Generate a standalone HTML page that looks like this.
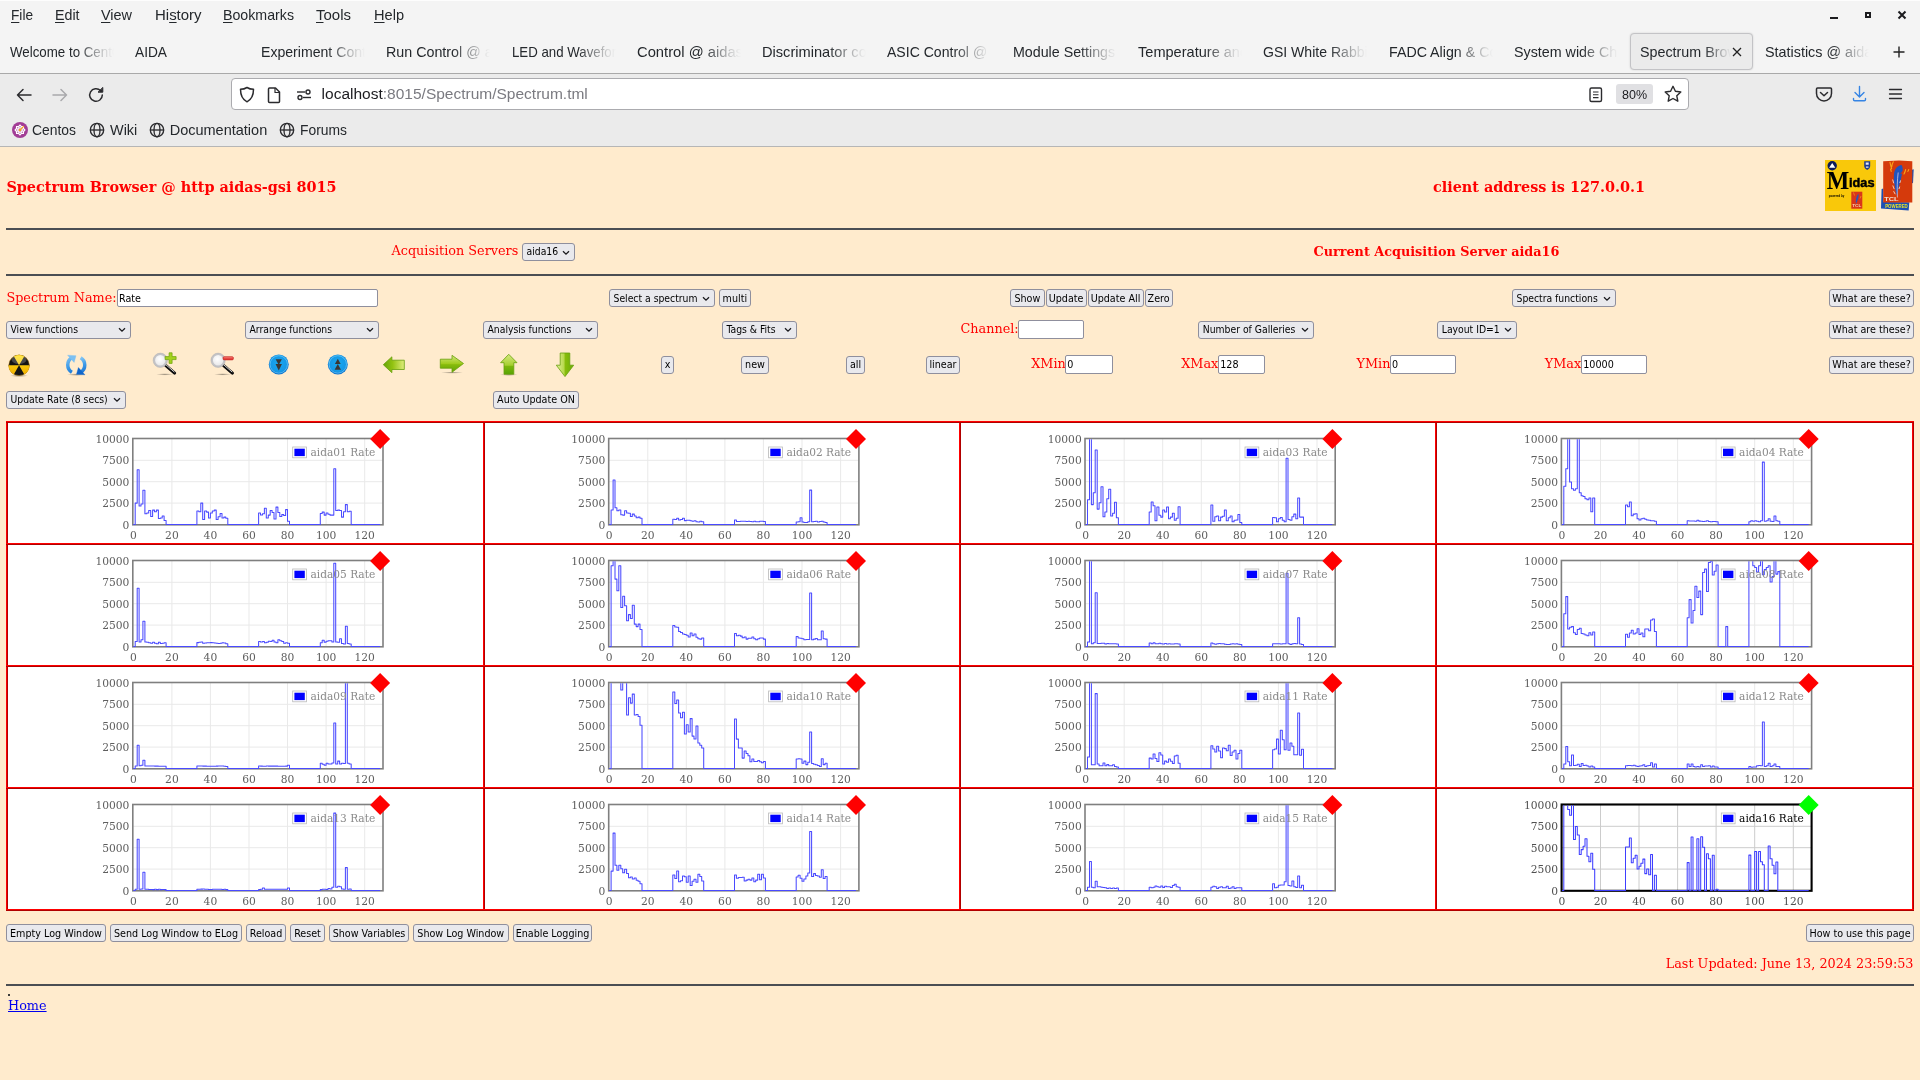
<!DOCTYPE html>
<html lang="en"><head><meta charset="utf-8"><title>Spectrum Browser</title>
<style>
*{box-sizing:border-box;margin:0;padding:0}
html,body{width:1920px;height:1080px;overflow:hidden;background:#ffebcd}
body{position:relative;will-change:transform;font-family:"DejaVu Serif","Liberation Serif",serif;color:#ff0000}
.abs{position:absolute}
#chrome{position:absolute;left:0;top:0;width:1920px;height:147px;font-family:"Liberation Sans","DejaVu Sans",sans-serif;color:#1b1b1f}
#topbar{position:absolute;left:0;top:0;width:1920px;height:73px;background:#f4f4f4;border-top:1px solid #fdfdfd}
#navbar{position:absolute;left:0;top:73px;width:1920px;height:74px;background:#ebebeb;border-top:1px solid #a9a9a9;border-bottom:1px solid #b6b6b6}
.mi{position:absolute;top:4.5px;font-size:14.5px;line-height:20px;white-space:nowrap;color:#24282c;transform-origin:0 50%}
.mi u{text-decoration:underline;text-underline-offset:2px;text-decoration-thickness:1px}
.tab{position:absolute;top:41.4px;height:22px;overflow:hidden;white-space:nowrap;font-size:14.5px;line-height:22px;color:#24282c}
#acttab{position:absolute;left:1630px;top:33px;width:123px;height:37px;border:1px solid #c3c3c6;border-radius:4px;background:#ebebeb;box-shadow:0 0 2px rgba(0,0,0,.15)}
#url{position:absolute;left:231px;top:78px;width:1458px;height:32px;background:#fff;border:1px solid #ababaf;border-radius:4px}
.bm{position:absolute;top:120.4px;font-size:14.5px;line-height:20px;color:#24282c;white-space:nowrap;transform-origin:0 50%}
.btn,.sel,.inp{position:absolute;font-family:"DejaVu Sans Condensed","DejaVu Sans","Liberation Sans",sans-serif;font-stretch:condensed;font-size:10.67px;color:#000;white-space:nowrap;overflow:hidden}
.btn{height:18px;line-height:16px;border:1px solid #8f8f9d;border-radius:3px;background:#e9e9ed;text-align:center;padding:0}
.sel{font-size:10.3px;height:18px;line-height:16px;border:1px solid #8f8f9d;border-radius:3px;background:#e9e9ed;padding-left:3.5px}
.sel svg{position:absolute;right:4px;top:5.5px}
.inp{height:17.5px;line-height:15.5px;border:1px solid #8f8f9d;border-radius:2px;background:#fff;padding-left:1px}
.lbl{position:absolute;font-size:12.8px;line-height:18px;white-space:nowrap;color:#ff0000}
.hb{position:absolute;font-size:14.4px;font-weight:bold;line-height:18px;white-space:nowrap;color:#ff0000}
.hr{position:absolute;left:6px;width:1908px;height:2px;background:#4b4e53}
</style></head>
<body>
<div id="chrome"><div id="topbar"></div><div id="navbar"></div>
<div class="mi" style="left:10.5px;transform:scaleX(0.942)"><u>F</u>ile</div>
<div class="mi" style="left:55px;transform:scaleX(0.980)"><u>E</u>dit</div>
<div class="mi" style="left:101px;transform:scaleX(0.995)"><u>V</u>iew</div>
<div class="mi" style="left:155px;transform:scaleX(1.031)">Hi<u>s</u>tory</div>
<div class="mi" style="left:223px;transform:scaleX(0.979)"><u>B</u>ookmarks</div>
<div class="mi" style="left:316px;transform:scaleX(1.034)"><u>T</u>ools</div>
<div class="mi" style="left:374px;transform:scaleX(1.006)"><u>H</u>elp</div>
<svg class="abs" style="left:1820px;top:5px" width="100" height="22" viewBox="0 0 100 22"><g stroke="#1c1c1f" stroke-width="2" fill="none"><path d="M10 13h8"/><rect x="46" y="8" width="4" height="4" stroke-width="2"/><path d="M78.500 6.500l7 7M85.500 6.500l-7 7"/></g></svg>
<div id="acttab"></div>
<div class="tab" style="left:10px;width:115.5px;transform-origin:0 50%;transform:scaleX(0.918);-webkit-mask-image:linear-gradient(to right,#000 0,#000 71.9px,rgba(0,0,0,.15) 104.6px,transparent 113.3px);mask-image:linear-gradient(to right,#000 0,#000 71.9px,rgba(0,0,0,.15) 104.6px,transparent 113.3px)">Welcome to CentOS</div>
<div class="tab" style="left:135px;width:112.1px;transform-origin:0 50%;transform:scaleX(0.946);-webkit-mask-image:linear-gradient(to right,#000 0,#000 69.8px,rgba(0,0,0,.15) 101.5px,transparent 110.0px);mask-image:linear-gradient(to right,#000 0,#000 69.8px,rgba(0,0,0,.15) 101.5px,transparent 110.0px)">AIDA</div>
<div class="tab" style="left:261px;width:109.0px;transform-origin:0 50%;transform:scaleX(0.972);-webkit-mask-image:linear-gradient(to right,#000 0,#000 67.9px,rgba(0,0,0,.15) 98.7px,transparent 107.0px);mask-image:linear-gradient(to right,#000 0,#000 67.9px,rgba(0,0,0,.15) 98.7px,transparent 107.0px)">Experiment Control</div>
<div class="tab" style="left:386px;width:107.6px;transform-origin:0 50%;transform:scaleX(0.985);-webkit-mask-image:linear-gradient(to right,#000 0,#000 67.0px,rgba(0,0,0,.15) 97.4px,transparent 105.6px);mask-image:linear-gradient(to right,#000 0,#000 67.0px,rgba(0,0,0,.15) 97.4px,transparent 105.6px)">Run Control @ aidas</div>
<div class="tab" style="left:511.7px;width:115.9px;transform-origin:0 50%;transform:scaleX(0.914);-webkit-mask-image:linear-gradient(to right,#000 0,#000 72.2px,rgba(0,0,0,.15) 105.0px,transparent 113.7px);mask-image:linear-gradient(to right,#000 0,#000 72.2px,rgba(0,0,0,.15) 105.0px,transparent 113.7px)">LED and Waveform</div>
<div class="tab" style="left:636.7px;width:104.2px;transform-origin:0 50%;transform:scaleX(1.017);-webkit-mask-image:linear-gradient(to right,#000 0,#000 64.9px,rgba(0,0,0,.15) 94.4px,transparent 102.3px);mask-image:linear-gradient(to right,#000 0,#000 64.9px,rgba(0,0,0,.15) 94.4px,transparent 102.3px)">Control @ aidas-gsi</div>
<div class="tab" style="left:762px;width:105.1px;transform-origin:0 50%;transform:scaleX(1.008);-webkit-mask-image:linear-gradient(to right,#000 0,#000 65.5px,rgba(0,0,0,.15) 95.2px,transparent 103.1px);mask-image:linear-gradient(to right,#000 0,#000 65.5px,rgba(0,0,0,.15) 95.2px,transparent 103.1px)">Discriminator control</div>
<div class="tab" style="left:887.3px;width:109.4px;transform-origin:0 50%;transform:scaleX(0.969);-webkit-mask-image:linear-gradient(to right,#000 0,#000 68.1px,rgba(0,0,0,.15) 99.1px,transparent 107.3px);mask-image:linear-gradient(to right,#000 0,#000 68.1px,rgba(0,0,0,.15) 99.1px,transparent 107.3px)">ASIC Control @ aidas</div>
<div class="tab" style="left:1013.3px;width:107.9px;transform-origin:0 50%;transform:scaleX(0.982);-webkit-mask-image:linear-gradient(to right,#000 0,#000 67.2px,rgba(0,0,0,.15) 97.8px,transparent 105.9px);mask-image:linear-gradient(to right,#000 0,#000 67.2px,rgba(0,0,0,.15) 97.8px,transparent 105.9px)">Module Settings @</div>
<div class="tab" style="left:1138.3px;width:105.6px;transform-origin:0 50%;transform:scaleX(1.004);-webkit-mask-image:linear-gradient(to right,#000 0,#000 65.8px,rgba(0,0,0,.15) 95.6px,transparent 103.6px);mask-image:linear-gradient(to right,#000 0,#000 65.8px,rgba(0,0,0,.15) 95.6px,transparent 103.6px)">Temperature and</div>
<div class="tab" style="left:1263.3px;width:109.4px;transform-origin:0 50%;transform:scaleX(0.969);-webkit-mask-image:linear-gradient(to right,#000 0,#000 68.1px,rgba(0,0,0,.15) 99.1px,transparent 107.4px);mask-image:linear-gradient(to right,#000 0,#000 68.1px,rgba(0,0,0,.15) 99.1px,transparent 107.4px)">GSI White Rabbit</div>
<div class="tab" style="left:1389px;width:108.1px;transform-origin:0 50%;transform:scaleX(0.981);-webkit-mask-image:linear-gradient(to right,#000 0,#000 67.3px,rgba(0,0,0,.15) 97.9px,transparent 106.1px);mask-image:linear-gradient(to right,#000 0,#000 67.3px,rgba(0,0,0,.15) 97.9px,transparent 106.1px)">FADC Align &amp; Control</div>
<div class="tab" style="left:1514.2px;width:107.6px;transform-origin:0 50%;transform:scaleX(0.985);-webkit-mask-image:linear-gradient(to right,#000 0,#000 67.0px,rgba(0,0,0,.15) 97.4px,transparent 105.5px);mask-image:linear-gradient(to right,#000 0,#000 67.0px,rgba(0,0,0,.15) 97.4px,transparent 105.5px)">System wide Checks</div>
<div class="tab" style="left:1639.6px;width:93.3px;transform-origin:0 50%;transform:scaleX(0.986);-webkit-mask-image:linear-gradient(to right,#000 0,#000 64.9px,rgba(0,0,0,.15) 87.2px,transparent 92.3px);mask-image:linear-gradient(to right,#000 0,#000 64.9px,rgba(0,0,0,.15) 87.2px,transparent 92.3px)">Spectrum Browser</div>
<div class="tab" style="left:1765.4px;width:107.1px;transform-origin:0 50%;transform:scaleX(0.990);-webkit-mask-image:linear-gradient(to right,#000 0,#000 66.7px,rgba(0,0,0,.15) 97.0px,transparent 105.0px);mask-image:linear-gradient(to right,#000 0,#000 66.7px,rgba(0,0,0,.15) 97.0px,transparent 105.0px)">Statistics @ aidas</div>
<svg class="abs" style="left:1730px;top:45px" width="14" height="14" viewBox="0 0 14 14"><path d="M3 3l8 8M11 3l-8 8" stroke="#222" stroke-width="1.3" fill="none"/></svg>
<svg class="abs" style="left:1892px;top:45px" width="14" height="14" viewBox="0 0 14 14"><path d="M7 1.5v11M1.5 7h11" stroke="#222" stroke-width="1.4" fill="none"/></svg>
<svg class="abs" style="left:14px;top:84px" width="100" height="22" viewBox="0 0 100 22" fill="none" stroke-linecap="round" stroke-linejoin="round"><path d="M17 11H3.5M9 5.5L3.5 11L9 16.5" stroke="#2b2b2e" stroke-width="1.5"/><path d="M39 11h13.5M47 5.5l5.500 5.500L47 16.500" stroke="#a9a9ac" stroke-width="1.5"/><path d="M88.300 11a6.300 6.300 0 1 1-1.800-4.400" stroke="#2b2b2e" stroke-width="1.5"/><path d="M88.800 3.800v4.400h-4.400z" fill="#2b2b2e" stroke="#2b2b2e" stroke-width="1"/></svg>
<div id="url"></div>
<svg class="abs" style="left:238px;top:84px" width="80" height="22" viewBox="0 0 80 22" fill="none" stroke="#2b2b2e" stroke-width="1.5" stroke-linejoin="round"><path d="M9 3.500c2 1.300 4 1.800 6.500 1.800c0 6-1.500 10-6.500 12.500c-5-2.500-6.500-6.500-6.500-12.500c2.500 0 4.500-.5 6.500-1.800z"/><path d="M31.500 4h6l4 4v9.500a1 1 0 0 1-1 1h-9a1 1 0 0 1-1-1v-12.500a1 1 0 0 1 1-1z"/><path d="M37 4v4.500h4.500" stroke-width="1.200"/><g stroke-width="1.400"><path d="M59 8h8"/><circle cx="70" cy="8" r="2"/><path d="M73 13.500h-8"/><circle cx="62" cy="13.500" r="2"/></g></svg>
<div class="abs" style="left:321.600px;top:83.900px;font-size:15.500px;line-height:20px;white-space:nowrap;color:#1b1b1f">localhost<span style="color:#7a7a80">:8015/Spectrum/Spectrum.tml</span></div>
<svg class="abs" style="left:1586px;top:84px" width="20" height="22" viewBox="0 0 20 22" fill="none" stroke="#2b2b2e" stroke-width="1.400"><rect x="4" y="4" width="11.500" height="13.500" rx="1.500"/><path d="M7 8h5.500M7 10.800h5.500M7 13.600h5.500" stroke-width="1.100"/></svg>
<div class="abs" style="left:1616px;top:84px;width:37px;height:20px;border-radius:3px;background:#e0e0e3;font-size:12.5px;line-height:22px;text-align:center;color:#1b1b1f">80%</div>
<svg class="abs" style="left:1662px;top:83px" width="22" height="22" viewBox="0 0 22 22" fill="none" stroke="#2b2b2e" stroke-width="1.400" stroke-linejoin="round"><path d="M11 3.300l2.400 5 5.400.7-4 3.800 1 5.400-4.800-2.700-4.800 2.700 1-5.400-4-3.800 5.400-.7z"/></svg>
<svg class="abs" style="left:1812px;top:83px" width="100" height="22" viewBox="0 0 100 22" fill="none" stroke-linecap="round" stroke-linejoin="round"><path d="M5.500 5h13a1 1 0 0 1 1 1v4.500a7.500 7.500 0 0 1-15 0V6a1 1 0 0 1 1-1z" stroke="#2b2b2e" stroke-width="1.500"/><path d="M8.500 9.500l3.500 3.300 3.500-3.300" stroke="#2b2b2e" stroke-width="1.500"/><path d="M47.500 3.500v10M43 9.500l4.500 4.500 4.500-4.500M41.500 15.500v1a1.200 1.200 0 0 0 1.200 1.200h9.600a1.200 1.200 0 0 0 1.200-1.200v-1" stroke="#3584e4" stroke-width="1.400"/><path d="M77.500 6.500h12M77.500 11h12M77.500 15.500h12" stroke="#2b2b2e" stroke-width="1.300"/></svg>
<svg class="abs" style="left:11px;top:121px" width="18" height="18" viewBox="0 0 18 18"><circle cx="9" cy="9" r="8" fill="#a23d96"/><path d="M9 3.300L10.700 4.900L13 4.950L13.100 7.300L14.700 9L13.100 10.700L13 13.050L10.700 13.100L9 14.700L7.300 13.100L5 13.050L4.900 10.700L3.300 9L4.900 7.300L5 4.950L7.300 4.900Z" fill="#fff"/><g fill="#b565ab"><circle cx="12.30" cy="9.00" r=".750"/><circle cx="11.33" cy="11.33" r=".750"/><circle cx="9.00" cy="12.30" r=".750"/><circle cx="6.67" cy="11.33" r=".750"/><circle cx="5.70" cy="9.00" r=".750"/><circle cx="6.67" cy="6.67" r=".750"/><circle cx="9.00" cy="5.70" r=".750"/><circle cx="11.33" cy="6.67" r=".750"/><circle cx="10.58" cy="9.64" r=".450"/><circle cx="9.66" cy="10.56" r=".450"/><circle cx="8.36" cy="10.58" r=".450"/><circle cx="7.44" cy="9.66" r=".450"/><circle cx="7.42" cy="8.36" r=".450"/><circle cx="8.34" cy="7.44" r=".450"/><circle cx="9.64" cy="7.42" r=".450"/><circle cx="10.56" cy="8.34" r=".450"/></g><path d="M9 9L12.600 5.400" stroke="#f5a61d" stroke-width="1.100" stroke-linecap="round"/><circle cx="9" cy="9" r="1.250" fill="#f5a61d"/></svg>
<div class="bm" style="left:32.4px;transform:scaleX(0.958)">Centos</div>
<svg class="abs" style="left:89.3px;top:122.300px" width="16" height="16" viewBox="0 0 16 16" fill="none" stroke="#2b2b2e" stroke-width="1.350"><circle cx="8" cy="8" r="6.700"/><ellipse cx="8" cy="8" rx="3" ry="6.700"/><path d="M1.300 8h13.400"/></svg>
<div class="bm" style="left:109.7px;transform:scaleX(0.997)">Wiki</div>
<svg class="abs" style="left:149.3px;top:122.300px" width="16" height="16" viewBox="0 0 16 16" fill="none" stroke="#2b2b2e" stroke-width="1.350"><circle cx="8" cy="8" r="6.700"/><ellipse cx="8" cy="8" rx="3" ry="6.700"/><path d="M1.300 8h13.400"/></svg>
<div class="bm" style="left:169.7px;transform:scaleX(1.000)">Documentation</div>
<svg class="abs" style="left:279.4px;top:122.300px" width="16" height="16" viewBox="0 0 16 16" fill="none" stroke="#2b2b2e" stroke-width="1.350"><circle cx="8" cy="8" r="6.700"/><ellipse cx="8" cy="8" rx="3" ry="6.700"/><path d="M1.300 8h13.400"/></svg>
<div class="bm" style="left:300px;transform:scaleX(0.956)">Forums</div>
</div>
<div class="hb" style="left:6.400px;top:178px;font-size:14.4px">Spectrum Browser @ http aidas-gsi 8015</div>
<div class="hb" style="left:1433px;top:178px;font-size:14.4px">client address is 127.0.0.1</div>
<div class="hr" style="top:228px"></div>
<div class="hr" style="top:274px"></div>
<div class="lbl" style="left:391.5px;top:242px">Acquisition Servers</div>
<div class="sel" style="left:522px;top:243.25px;width:52.75px;height:17.5px;line-height:14px">aida16<svg width="8" height="6" viewBox="0 0 8 6"><path d="M1 1.200l3 3 3-3" fill="none" stroke="#1b1b1f" stroke-width="1.300"/></svg></div>
<div class="hb" style="left:1313.500px;top:243px;font-size:12.8px">Current Acquisition Server aida16</div>
<div class="lbl" style="left:6.4px;top:289px">Spectrum Name:</div>
<div class="inp" style="left:117px;top:289.25px;width:260.75px;height:17.5px;line-height:17.5px">Rate</div>
<div class="sel" style="left:609px;top:289.25px;width:105.75px;height:17.5px;line-height:17.5px">Select a spectrum<svg width="8" height="6" viewBox="0 0 8 6"><path d="M1 1.200l3 3 3-3" fill="none" stroke="#1b1b1f" stroke-width="1.300"/></svg></div>
<div class="btn" style="left:719px;top:289.25px;width:31.75px;height:17.5px;line-height:17.5px">multi</div>
<div class="btn" style="left:1010.25px;top:289.25px;width:34.25px;height:17.5px;line-height:17.5px">Show</div>
<div class="btn" style="left:1045.5px;top:289.25px;width:41.25px;height:17.5px;line-height:17.5px">Update</div>
<div class="btn" style="left:1087.5px;top:289.25px;width:56px;height:17.5px;line-height:17.5px">Update All</div>
<div class="btn" style="left:1144.5px;top:289.25px;width:28.25px;height:17.5px;line-height:17.5px">Zero</div>
<div class="sel" style="left:1512px;top:289.25px;width:103.75px;height:17.5px;line-height:17.5px">Spectra functions<svg width="8" height="6" viewBox="0 0 8 6"><path d="M1 1.200l3 3 3-3" fill="none" stroke="#1b1b1f" stroke-width="1.300"/></svg></div>
<div class="btn" style="left:1829.25px;top:289.25px;width:84.5px;height:17.5px;line-height:17.5px">What are these?</div>
<div class="sel" style="left:6px;top:320.5px;width:124.5px;height:18px;line-height:15px">View functions<svg width="8" height="6" viewBox="0 0 8 6"><path d="M1 1.200l3 3 3-3" fill="none" stroke="#1b1b1f" stroke-width="1.300"/></svg></div>
<div class="sel" style="left:245px;top:320.5px;width:133.5px;height:18px;line-height:15px">Arrange functions<svg width="8" height="6" viewBox="0 0 8 6"><path d="M1 1.200l3 3 3-3" fill="none" stroke="#1b1b1f" stroke-width="1.300"/></svg></div>
<div class="sel" style="left:483px;top:320.5px;width:114.75px;height:18px;line-height:15px">Analysis functions<svg width="8" height="6" viewBox="0 0 8 6"><path d="M1 1.200l3 3 3-3" fill="none" stroke="#1b1b1f" stroke-width="1.300"/></svg></div>
<div class="sel" style="left:722px;top:320.5px;width:74.75px;height:18px;line-height:15px">Tags &amp; Fits<svg width="8" height="6" viewBox="0 0 8 6"><path d="M1 1.200l3 3 3-3" fill="none" stroke="#1b1b1f" stroke-width="1.300"/></svg></div>
<div class="lbl" style="left:960.5px;top:320px">Channel:</div>
<div class="inp" style="left:1018px;top:320.25px;width:66px;height:18.5px;line-height:18.5px"></div>
<div class="sel" style="left:1198.25px;top:320.5px;width:115.5px;height:18px;line-height:15px">Number of Galleries<svg width="8" height="6" viewBox="0 0 8 6"><path d="M1 1.200l3 3 3-3" fill="none" stroke="#1b1b1f" stroke-width="1.300"/></svg></div>
<div class="sel" style="left:1437.25px;top:320.5px;width:79.5px;height:18px;line-height:15px">Layout ID=1<svg width="8" height="6" viewBox="0 0 8 6"><path d="M1 1.200l3 3 3-3" fill="none" stroke="#1b1b1f" stroke-width="1.300"/></svg></div>
<div class="btn" style="left:1829.25px;top:320.5px;width:84.5px;height:18px;line-height:16px">What are these?</div>
<div class="btn" style="left:661.25px;top:355.5px;width:12.5px;height:18px;line-height:16px">x</div>
<div class="btn" style="left:741.25px;top:355.5px;width:27.5px;height:18px;line-height:16px">new</div>
<div class="btn" style="left:846.25px;top:355.5px;width:18.5px;height:18px;line-height:16px">all</div>
<div class="btn" style="left:926.25px;top:355.5px;width:33.5px;height:18px;line-height:16px">linear</div>
<div class="lbl" style="left:1031.25px;top:355px">XMin</div>
<div class="inp" style="left:1065.25px;top:355.25px;width:47.5px;height:18.5px;line-height:18.5px">0</div>
<div class="lbl" style="left:1181.25px;top:355px">XMax</div>
<div class="inp" style="left:1218.25px;top:355.25px;width:46.5px;height:18.5px;line-height:18.5px">128</div>
<div class="lbl" style="left:1356.5px;top:355px">YMin</div>
<div class="inp" style="left:1390px;top:355.25px;width:66px;height:18.5px;line-height:18.5px">0</div>
<div class="lbl" style="left:1544.75px;top:355px">YMax</div>
<div class="inp" style="left:1581.25px;top:355.25px;width:65.5px;height:18.5px;line-height:18.5px">10000</div>
<div class="btn" style="left:1829.25px;top:355.5px;width:84.5px;height:18px;line-height:16px">What are these?</div>
<div class="sel" style="left:6px;top:390.5px;width:119.5px;height:18px;line-height:15px">Update Rate (8 secs)<svg width="8" height="6" viewBox="0 0 8 6"><path d="M1 1.200l3 3 3-3" fill="none" stroke="#1b1b1f" stroke-width="1.300"/></svg></div>
<div class="btn" style="left:493.25px;top:390.5px;width:85.5px;height:18px;line-height:16px">Auto Update ON</div>
<div class="btn" style="left:6.25px;top:924.25px;width:99.5px;height:17.5px;line-height:17.5px">Empty Log Window</div>
<div class="btn" style="left:110.25px;top:924.25px;width:131.5px;height:17.5px;line-height:17.5px">Send Log Window to ELog</div>
<div class="btn" style="left:246.25px;top:924.25px;width:39.5px;height:17.5px;line-height:17.5px">Reload</div>
<div class="btn" style="left:290.25px;top:924.25px;width:34.5px;height:17.5px;line-height:17.5px">Reset</div>
<div class="btn" style="left:329.25px;top:924.25px;width:79.5px;height:17.5px;line-height:17.5px">Show Variables</div>
<div class="btn" style="left:413px;top:924.25px;width:95.5px;height:17.5px;line-height:17.5px">Show Log Window</div>
<div class="btn" style="left:513px;top:924.25px;width:79px;height:17.5px;line-height:17.5px">Enable Logging</div>
<div class="btn" style="left:1806.25px;top:924.25px;width:107.5px;height:17.5px;line-height:17.5px">How to use this page</div>
<div class="lbl" style="right:6.500px;top:955px">Last Updated: June 13, 2024 23:59:53</div>
<div class="hr" style="top:984px"></div>
<div class="abs" style="left:8px;top:994px;width:2px;height:2px;background:#3c3c3c"></div>
<div class="lbl" style="left:8px;top:997px;font-size:12.800px;color:#0000ee;text-decoration:underline">Home</div>
<svg class="abs" style="left:0;top:345px" width="600" height="40" viewBox="0 345 600 40">
<defs>
<radialGradient id="gsh" cx="50%" cy="50%" r="50%"><stop offset="0" stop-color="#000" stop-opacity=".38"/><stop offset="1" stop-color="#000" stop-opacity="0"/></radialGradient>
<linearGradient id="gy" x1="0" y1="0" x2="0" y2="1"><stop offset="0" stop-color="#ffe01a"/><stop offset="1" stop-color="#f2b200"/></linearGradient>
<linearGradient id="gbl" gradientUnits="userSpaceOnUse" x1="66" y1="356" x2="74" y2="374"><stop offset="0" stop-color="#86c8f5"/><stop offset=".6" stop-color="#3b98e6"/><stop offset="1" stop-color="#1470d2"/></linearGradient><linearGradient id="gbl2" gradientUnits="userSpaceOnUse" x1="66" y1="356" x2="74" y2="374"><stop offset="0" stop-color="#1068cc"/><stop offset=".5" stop-color="#3f9be8"/><stop offset="1" stop-color="#9ad4f8"/></linearGradient>
<radialGradient id="gbc" cx="50%" cy="45%" r="55%"><stop offset="0" stop-color="#19a8f0"/><stop offset=".75" stop-color="#1598e6"/><stop offset="1" stop-color="#0a6cc8"/></radialGradient>
<linearGradient id="ggl" x1="0" y1="0" x2="1" y2="0"><stop offset="0" stop-color="#63a307"/><stop offset=".45" stop-color="#93c312"/><stop offset="1" stop-color="#dfec7c"/></linearGradient>
<linearGradient id="ggr" x1="0" y1="0" x2="0" y2="1"><stop offset="0" stop-color="#d3e77c"/><stop offset=".5" stop-color="#9fcb1c"/><stop offset=".55" stop-color="#86bb0c"/><stop offset="1" stop-color="#62a406"/></linearGradient>
<linearGradient id="ggu" x1="0" y1="0" x2="0" y2="1"><stop offset="0" stop-color="#d6ea80"/><stop offset=".55" stop-color="#a5cf30"/><stop offset=".6" stop-color="#7cb70c"/><stop offset="1" stop-color="#58a404"/></linearGradient>
<linearGradient id="ggd" x1="0" y1="0" x2="1" y2="0"><stop offset="0" stop-color="#e2f09a"/><stop offset=".45" stop-color="#b6d84a"/><stop offset=".5" stop-color="#88bd0c"/><stop offset="1" stop-color="#6aac06"/></linearGradient>
<radialGradient id="glens" cx="45%" cy="40%" r="60%"><stop offset="0" stop-color="#fff"/><stop offset="1" stop-color="#e4e4e6"/></radialGradient>
</defs>
<ellipse cx="19.05" cy="375.6" rx="9" ry="1.600" fill="url(#gsh)"/>
<circle cx="19.05" cy="365.3" r="10.5" fill="#141414"/>
<path d="M19.05 365.3L13.80 356.21A10.5 10.5 0 0 1 24.30 356.21ZM19.05 365.3L29.55 365.30A10.5 10.5 0 0 1 24.30 374.39ZM19.05 365.3L13.80 374.39A10.5 10.5 0 0 1 8.55 365.30Z" fill="url(#gy)"/>
<circle cx="19.05" cy="365.3" r="10.3" fill="none" stroke="#e9a51a" stroke-width=".500" stroke-opacity=".8"/>
<ellipse cx="19.05" cy="359.8" rx="7.500" ry="4.200" fill="#fff" fill-opacity=".22"/>
<ellipse cx="76.500" cy="374.600" rx="9.500" ry="1.300" fill="url(#gsh)"/>
<g><path d="M71.87 372.29A8.5 8.5 0 0 1 71.75 357.79" fill="none" stroke-width="3.500" stroke="url(#gbl)"/><path d="M67.600 355.200L76 355.700L74.100 362.400Z" fill="#7cc0f2" stroke="#7cc0f2" stroke-width=".400" stroke-linejoin="round"/></g>
<g transform="rotate(180 76.250 365)"><path d="M71.87 372.29A8.5 8.5 0 0 1 71.75 357.79" fill="none" stroke-width="3.500" stroke="url(#gbl2)"/><path d="M67.600 355.200L76 355.700L74.100 362.400Z" fill="#0f66cc" stroke="#0f66cc" stroke-width=".400" stroke-linejoin="round"/></g>
<ellipse cx="164.8" cy="374.40000000000003" rx="8.500" ry="1.200" fill="url(#gsh)"/><path d="M165.60000000000002 365.3L174.60000000000002 373.1" stroke="#0c0c0c" stroke-width="3.100" stroke-linecap="round"/><path d="M166.10000000000002 364.90000000000003L174.10000000000002 371.8" stroke="#f2f2f2" stroke-width=".900" stroke-linecap="round"/><circle cx="160.3" cy="360.3" r="6.200" fill="url(#glens)" stroke="#c3c3c6" stroke-width="2"/><circle cx="160.3" cy="360.3" r="7.200" fill="none" stroke="#a9a9ad" stroke-width=".400"/><path d="M165.10000000000002 356.6H169.10000000000002V352.8H172.10000000000002V356.6H176.10000000000002V359.6H172.10000000000002V363.40000000000003H169.10000000000002V359.6H165.10000000000002Z" fill="#a4d21e" stroke="#6c9f0a" stroke-width=".700" stroke-linejoin="round"/>
<ellipse cx="222.6" cy="374.40000000000003" rx="8.500" ry="1.200" fill="url(#gsh)"/><path d="M223.4 365.3L232.4 373.1" stroke="#0c0c0c" stroke-width="3.100" stroke-linecap="round"/><path d="M223.9 364.90000000000003L231.9 371.8" stroke="#f2f2f2" stroke-width=".900" stroke-linecap="round"/><circle cx="218.1" cy="360.3" r="6.200" fill="url(#glens)" stroke="#c3c3c6" stroke-width="2"/><circle cx="218.1" cy="360.3" r="7.200" fill="none" stroke="#a9a9ad" stroke-width=".400"/><rect x="223.0" y="356.7" width="10.400" height="3.200" rx="1.200" fill="#e5413c" stroke="#c0201c" stroke-width=".600"/><path d="M224.1 357.7H232.29999999999998" stroke="#f47a72" stroke-width=".800" stroke-linecap="round"/>
<circle cx="278.75" cy="364.4" r="10" fill="url(#gbc)"/><circle cx="278.75" cy="364.4" r="8.700" fill="none" stroke="#8fdcff" stroke-width=".700" stroke-opacity=".75"/><path d="M275.65 359.2H281.85L278.75 365.0Z" fill="#3a3634"/><path d="M275.55 364.0H281.95L278.75 370.4Z" fill="#3a3634"/>
<circle cx="337.8" cy="364.4" r="10" fill="url(#gbc)"/><circle cx="337.8" cy="364.4" r="8.700" fill="none" stroke="#8fdcff" stroke-width=".700" stroke-opacity=".75"/><path d="M337.8 358.79999999999995L340.7 363.9H334.90000000000003Z" fill="#3a3634"/><path d="M337.8 364.0L341.0 369.79999999999995H334.6Z" fill="#3a3634"/>
<path d="M383.300 364.700L391.900 356.800V360.200H404.300V369.500H391.900V372.700Z" fill="url(#ggl)" stroke="#67a00c" stroke-width=".800" stroke-linejoin="round"/>
<ellipse cx="452" cy="372.600" rx="11" ry="1.100" fill="url(#gsh)"/>
<path d="M463.500 363.500L452 355.300V359.200H440.300V368.200H452V372.300Z" fill="url(#ggr)" stroke="#67a00c" stroke-width=".800" stroke-linejoin="round"/>
<ellipse cx="508.800" cy="374.700" rx="9" ry="1.200" fill="url(#gsh)"/>
<path d="M508.750 354.300L517 362.700H513.800V374.200H504V362.700H500.600Z" fill="url(#ggu)" stroke="#67a00c" stroke-width=".800" stroke-linejoin="round"/>
<path d="M565 376.600L556.300 365.200H560.200V353H569.800V365.200H573.700Z" fill="url(#ggd)" stroke="#67a00c" stroke-width=".800" stroke-linejoin="round"/>
</svg>
<svg class="abs" style="left:1825px;top:160px" width="51" height="51" viewBox="0 0 51 51"><rect width="51" height="51" fill="#f9c80a"/><circle cx="7.200" cy="5.700" r="4.700" fill="#0c1a5a"/><path d="M7.200 3L10.300 7.800H4.100Z" fill="#fff"/><path d="M39.200 1.200h6v4.800c0 2-1.500 3.300-3 4c-1.500-.7-3-2-3-4z" fill="#1d3c8e"/><path d="M40.700 2.600h3v2.200h-3zM40.900 6.400h2.600v1.300h-2.600z" fill="#e8e8f4"/><text x="1.800" y="28.600" font-family="Liberation Serif, DejaVu Serif, serif" font-weight="bold" font-size="24.200" fill="#000" textLength="22.500" lengthAdjust="spacingAndGlyphs">M</text><text x="24" y="26.500" font-family="Liberation Sans, DejaVu Sans, sans-serif" font-weight="bold" font-size="12.500" fill="#000" stroke="#000" stroke-width=".450" textLength="25.500" lengthAdjust="spacingAndGlyphs">idas</text><text x="3.800" y="37" font-family="Liberation Sans, DejaVu Sans, sans-serif" font-weight="bold" font-size="3.600" fill="#000" textLength="15.500" lengthAdjust="spacingAndGlyphs">powered by</text><rect x="26.300" y="31.700" width="11" height="17" fill="#d9361a"/><path d="M33.400 33.800c-1.600 1.600-3 5.300-2.400 10.500c.6-2 1-3 1.900-4.600c.7-2 .9-4.300.5-5.900z" fill="#2a55b8"/><path d="M28.500 32.500l1 3M36 36l-1 2.500" stroke="#f9b21a" stroke-width=".600"/><text x="27.300" y="46.800" font-family="Liberation Sans, DejaVu Sans, sans-serif" font-weight="bold" font-size="2.600" fill="#f4d9b0" textLength="9" lengthAdjust="spacingAndGlyphs">TCL</text></svg><svg class="abs" style="left:1880px;top:159px" width="36" height="53" viewBox="0 0 36 53"><path d="M1.600 30L3.400 29.500L3.400 43L29.300 43.200L28.700 51.600L1 49.600Z" fill="#1b4fb4"/><path d="M32 10.800L33.700 10.200L33 24.200L32 24Z" fill="#1b4fb4"/><path d="M3.200 2.300L19 1.500L32.300 2.300L32.300 43.400L3.200 43.400Z" fill="#d53a0c"/><path d="M21.500 6C17.500 6.500 14.500 10 14 15C13.600 19 13.800 22 14.600 26C15.200 30 16 34 17.300 37.300C17.800 33 18.400 29 19.600 25C20.800 21 21.500 18 22 14.500L20.200 14.900L22.600 12C23 9.500 22.600 7.500 21.500 6Z" fill="#2053bd"/><path d="M18.200 13.500C17.200 21 17 30 17.400 38.500" stroke="#e9d9de" stroke-width=".700" fill="none"/><path d="M12.600 20.500l1.200 3.800M12.800 26.500l1.400 3.600M13.600 32.200l1.600 3M19.800 24l.8-2.600M19 30l.7-2.400" stroke="#f3ebe6" stroke-width=".800" fill="none"/><path d="M10 3.200c.3 2 1 4 1.600 6.500M13.300 2.800c-1 1.600-1.400 3.200-1.600 5.200M10.600 10l.6 2.400M25.600 10.600c-.2 1.500-.8 2.800-1.600 4.400M28.700 10.600l-.8 1.800" stroke="#f9a61a" stroke-width="1.100" fill="none" stroke-linecap="round"/><text x="4.300" y="41.700" font-family="Liberation Sans, DejaVu Sans, sans-serif" font-weight="bold" font-size="5.600" fill="#f3dfd3" textLength="14.300" lengthAdjust="spacingAndGlyphs">TCL</text><text x="5.200" y="48.900" font-family="Liberation Sans, DejaVu Sans, sans-serif" font-weight="bold" font-size="4.800" fill="#ece226" textLength="22.600" lengthAdjust="spacingAndGlyphs">POWERED</text></svg>
<div class="abs" style="left:6px;top:421px;width:1908px;height:490px;background:#fff"></div>
<div class="abs" style="left:6px;top:421px;width:2px;height:490px;background:linear-gradient(to right,#ff0000 0,#ff0000 50%,#b00000 50%,#b00000 100%)"></div>
<div class="abs" style="left:483px;top:421px;width:2px;height:490px;background:linear-gradient(to right,#ff0000 0,#ff0000 50%,#b00000 50%,#b00000 100%)"></div>
<div class="abs" style="left:959px;top:421px;width:2px;height:490px;background:linear-gradient(to right,#ff0000 0,#ff0000 50%,#b00000 50%,#b00000 100%)"></div>
<div class="abs" style="left:1435px;top:421px;width:2px;height:490px;background:linear-gradient(to right,#ff0000 0,#ff0000 50%,#b00000 50%,#b00000 100%)"></div>
<div class="abs" style="left:1912px;top:421px;width:2px;height:490px;background:linear-gradient(to right,#ff0000 0,#ff0000 50%,#b00000 50%,#b00000 100%)"></div>
<div class="abs" style="left:6px;top:421px;width:1908px;height:2px;background:linear-gradient(to bottom,#ff0000 0,#ff0000 50%,#b00000 50%,#b00000 100%)"></div>
<div class="abs" style="left:6px;top:543px;width:1908px;height:2px;background:linear-gradient(to bottom,#ff0000 0,#ff0000 50%,#b00000 50%,#b00000 100%)"></div>
<div class="abs" style="left:6px;top:665px;width:1908px;height:2px;background:linear-gradient(to bottom,#ff0000 0,#ff0000 50%,#b00000 50%,#b00000 100%)"></div>
<div class="abs" style="left:6px;top:787px;width:1908px;height:2px;background:linear-gradient(to bottom,#ff0000 0,#ff0000 50%,#b00000 50%,#b00000 100%)"></div>
<div class="abs" style="left:6px;top:909px;width:1908px;height:2px;background:linear-gradient(to bottom,#ff0000 0,#ff0000 50%,#b00000 50%,#b00000 100%)"></div>
<svg class="abs" style="left:8px;top:423px" width="475" height="120" viewBox="0 0 475 120" font-family="DejaVu Serif, Liberation Serif, serif"><clipPath id="cp0"><rect x="124.8" y="16.3" width="250.2" height="87.3"/></clipPath><path d="M163.9 15.5V101.8M202.4 15.5V101.8M241.0 15.5V101.8M279.5 15.5V101.8M318.1 15.5V101.8M356.7 15.5V101.8M124.8 80.1H375.0M124.8 58.7H375.0M124.8 37.3H375.0" stroke="#e9e9e9" stroke-width="1" fill="none"/><rect x="124.8" y="15.5" width="250.2" height="86.3" fill="none" stroke="#7f7f7f" stroke-width="1.6"/><path d="M125.3 101.5H127.2V80.1H129.2V46.7H131.1V83.0H133.0V81.0H134.9V67.3H136.9V90.8H138.8V89.9H140.7V87.5H142.7V93.5H144.6V87.1H146.5V88.7H148.4V87.1H150.4V95.4H152.3V94.9H154.2V92.9H156.1V97.4H158.1V101.5H160.0H161.9H163.9H165.8H167.7H169.6H171.6H173.5H175.4H177.4H179.3H181.2H183.1H185.1H187.0H188.9V88.0H190.9V88.7H192.8V80.1H194.7V96.5H196.6V88.0H198.6V89.1H200.5V94.9H202.4V89.9H204.3V88.0H206.3V87.1H208.2V96.5H210.1V93.8H212.1V90.4H214.0V94.9H215.9V94.1H217.8V95.3H219.8V101.5H221.7H223.6H225.6H227.5H229.4H231.3H233.3H235.2H237.1H239.1H241.0H242.9H244.8H246.8H248.7H250.6V89.9H252.5V91.9H254.5V90.8H256.4V85.2H258.3V94.9H260.3V92.1H262.2V87.5H264.1V89.5H266.0V96.0H268.0V84.1H269.9V89.5H271.8V93.5H273.8V91.6H275.7V92.4H277.6V86.6H279.5V98.2H281.5V101.5H283.4H285.3H287.3H289.2H291.1H293.0H295.0H296.9H298.8H300.7H302.7H304.6H306.5H308.5H310.4H312.3V90.4H314.2V89.1H316.2V92.1H318.1V89.9H320.0V91.2H322.0V92.1H323.9H325.8V45.7H327.7V87.5H329.7V87.1H331.6V87.5H333.5V94.1H335.5V88.7H337.4V81.6H339.3V88.7H341.2V88.3H343.2V101.5H345.1H347.0H348.9H350.9H352.8H354.7H356.7H358.6H360.5H362.4H364.4H366.3H368.2H370.2H372.1" stroke="#4a4aff" stroke-width="1.050" fill="none" stroke-linejoin="round" clip-path="url(#cp0)"/><text x="121.4" y="105.5" font-size="10.700" text-anchor="end" fill="#5e5e5e">0</text><text x="121.4" y="84.1" font-size="10.700" text-anchor="end" fill="#5e5e5e">2500</text><text x="121.4" y="62.7" font-size="10.700" text-anchor="end" fill="#5e5e5e">5000</text><text x="121.4" y="41.3" font-size="10.700" text-anchor="end" fill="#5e5e5e">7500</text><text x="121.4" y="19.9" font-size="10.700" text-anchor="end" fill="#5e5e5e">10000</text><text x="125.3" y="116.0" font-size="10.700" text-anchor="middle" fill="#5e5e5e">0</text><text x="163.9" y="116.0" font-size="10.700" text-anchor="middle" fill="#5e5e5e">20</text><text x="202.4" y="116.0" font-size="10.700" text-anchor="middle" fill="#5e5e5e">40</text><text x="241.0" y="116.0" font-size="10.700" text-anchor="middle" fill="#5e5e5e">60</text><text x="279.5" y="116.0" font-size="10.700" text-anchor="middle" fill="#5e5e5e">80</text><text x="318.1" y="116.0" font-size="10.700" text-anchor="middle" fill="#5e5e5e">100</text><text x="356.7" y="116.0" font-size="10.700" text-anchor="middle" fill="#5e5e5e">120</text><rect x="284.7" y="24.0" width="13.800" height="10.800" fill="#fff" stroke="#b9b9b9" stroke-width="0.800"/><rect x="286.4" y="25.7" width="10.400" height="7.400" fill="#0000ff"/><text x="302.5" y="33.3" font-size="10.600" fill="#8a8a8a">aida01 Rate</text><path d="M372.1 6.1L382.1 16.1L372.1 26.1L362.1 16.1Z" fill="#ff0000"/></svg>
<svg class="abs" style="left:485px;top:423px" width="475" height="120" viewBox="0 0 475 120" font-family="DejaVu Serif, Liberation Serif, serif"><clipPath id="cp1"><rect x="123.7" y="16.3" width="250.2" height="87.3"/></clipPath><path d="M162.8 15.5V101.8M201.3 15.5V101.8M239.9 15.5V101.8M278.4 15.5V101.8M317.0 15.5V101.8M355.6 15.5V101.8M123.7 80.1H373.9M123.7 58.7H373.9M123.7 37.3H373.9" stroke="#e9e9e9" stroke-width="1" fill="none"/><rect x="123.7" y="15.5" width="250.2" height="86.3" fill="none" stroke="#7f7f7f" stroke-width="1.6"/><path d="M124.2 101.5H126.1V87.0H128.1V57.0H130.0V84.8H131.9V87.8H133.8V86.9H135.8V91.8H137.7V92.1H139.6V87.8H141.6V89.9H143.5V90.2H145.4V93.5H147.3V91.1H149.3V92.9H151.2V94.8H153.1V94.1H155.0V95.2H157.0V101.5H158.9H160.8H162.8H164.7H166.6H168.5H170.5H172.4H174.3H176.3H178.2H180.1H182.0H184.0H185.9H187.8V96.2H189.8V96.5H191.7V95.3H193.6V97.0H195.5V96.5H197.5V95.3H199.4V97.6H201.3V97.3H203.2H205.2V97.8H207.1V98.2H209.0V97.8H211.0V98.7H212.9V99.0H214.8V98.2H216.7V98.7H218.7V101.5H220.6H222.5H224.5H226.4H228.3H230.2H232.2H234.1H236.0H238.0H239.9H241.8H243.7H245.7H247.6H249.5V97.0H251.4V98.5H253.4H255.3V98.3H257.2V98.2H259.2V98.3H261.1V98.5H263.0V98.3H264.9V98.5H266.9V98.7H268.8V98.2H270.7V98.8H272.7V98.7H274.6V98.3H276.5V98.2H278.4V98.5H280.4V101.5H282.3H284.2H286.2H288.1H290.0H291.9H293.9H295.8H297.7H299.6H301.6H303.5H305.4H307.4H309.3H311.2V99.0H313.1V98.7H315.1V94.8H317.0V99.0H318.9V99.5H320.9V99.4H322.8V98.7H324.7V67.1H326.6V98.7H328.6V98.5H330.5V98.2H332.4V99.0H334.4V98.5H336.3V98.2H338.2V99.0H340.1V99.4H342.1V101.5H344.0H345.9H347.8H349.8H351.7H353.6H355.6H357.5H359.4H361.3H363.3H365.2H367.1H369.1H371.0" stroke="#4a4aff" stroke-width="1.050" fill="none" stroke-linejoin="round" clip-path="url(#cp1)"/><text x="120.3" y="105.5" font-size="10.700" text-anchor="end" fill="#5e5e5e">0</text><text x="120.3" y="84.1" font-size="10.700" text-anchor="end" fill="#5e5e5e">2500</text><text x="120.3" y="62.7" font-size="10.700" text-anchor="end" fill="#5e5e5e">5000</text><text x="120.3" y="41.3" font-size="10.700" text-anchor="end" fill="#5e5e5e">7500</text><text x="120.3" y="19.9" font-size="10.700" text-anchor="end" fill="#5e5e5e">10000</text><text x="124.2" y="116.0" font-size="10.700" text-anchor="middle" fill="#5e5e5e">0</text><text x="162.8" y="116.0" font-size="10.700" text-anchor="middle" fill="#5e5e5e">20</text><text x="201.3" y="116.0" font-size="10.700" text-anchor="middle" fill="#5e5e5e">40</text><text x="239.9" y="116.0" font-size="10.700" text-anchor="middle" fill="#5e5e5e">60</text><text x="278.4" y="116.0" font-size="10.700" text-anchor="middle" fill="#5e5e5e">80</text><text x="317.0" y="116.0" font-size="10.700" text-anchor="middle" fill="#5e5e5e">100</text><text x="355.6" y="116.0" font-size="10.700" text-anchor="middle" fill="#5e5e5e">120</text><rect x="283.6" y="24.0" width="13.800" height="10.800" fill="#fff" stroke="#b9b9b9" stroke-width="0.800"/><rect x="285.3" y="25.7" width="10.400" height="7.400" fill="#0000ff"/><text x="301.4" y="33.3" font-size="10.600" fill="#8a8a8a">aida02 Rate</text><path d="M371.0 6.1L381.0 16.1L371.0 26.1L361.0 16.1Z" fill="#ff0000"/></svg>
<svg class="abs" style="left:961px;top:423px" width="475" height="120" viewBox="0 0 475 120" font-family="DejaVu Serif, Liberation Serif, serif"><clipPath id="cp2"><rect x="124.0" y="16.3" width="250.2" height="87.3"/></clipPath><path d="M163.2 15.5V101.8M201.7 15.5V101.8M240.3 15.5V101.8M278.8 15.5V101.8M317.4 15.5V101.8M356.0 15.5V101.8M124.0 80.1H374.3M124.0 58.7H374.3M124.0 37.3H374.3" stroke="#e9e9e9" stroke-width="1" fill="none"/><rect x="124.0" y="15.5" width="250.2" height="86.3" fill="none" stroke="#7f7f7f" stroke-width="1.6"/><path d="M124.6 101.5H126.5V76.8H128.5V12.5H130.4V81.6H132.3V69.8H134.2V26.9H136.2V86.1H138.1V79.8H140.0V63.8H142.0V93.7H143.9V89.0H145.8V75.7H147.7V66.2H149.7V92.9H151.6V90.2H153.5V79.3H155.4V94.8H157.4V101.5H159.3H161.2H163.2H165.1H167.0H168.9H170.9H172.8H174.7H176.7H178.6H180.5H182.4H184.4H186.3H188.2V89.0H190.2V79.0H192.1V82.8H194.0V97.8H195.9V84.0H197.9V92.3H199.8V94.1H201.7V87.0H203.6V89.0H205.6V84.0H207.5V95.7H209.4V94.1H211.4V90.2H213.3V97.3H215.2V95.2H217.1V83.7H219.1V101.5H221.0H222.9H224.9H226.8H228.7H230.6H232.6H234.5H236.4H238.4H240.3H242.2H244.1H246.1H248.0H249.9V82.0H251.8V98.2H253.8V93.7H255.7V92.9H257.6V97.8H259.6V94.1H261.5V93.2H263.4V87.0H265.3V97.8H267.3V94.8H269.2V92.9H271.1V98.7H273.1V97.3H275.0V96.9H276.9V91.5H278.8V99.4H280.8V101.5H282.7H284.6H286.6H288.5H290.4H292.3H294.3H296.2H298.1H300.0H302.0H303.9H305.8H307.8H309.7H311.6V94.5H313.5V94.8H315.5V98.7H317.4V95.7H319.3V94.5H321.3V97.3H323.2V98.7H325.1V35.2H327.0V96.5H329.0V97.3H330.9V93.7H332.8V91.1H334.8V95.7H336.7V74.9H338.6V94.1H340.5H342.5V101.5H344.4H346.3H348.2H350.2H352.1H354.0H356.0H357.9H359.8H361.7H363.7H365.6H367.5H369.5H371.4" stroke="#4a4aff" stroke-width="1.050" fill="none" stroke-linejoin="round" clip-path="url(#cp2)"/><text x="120.7" y="105.5" font-size="10.700" text-anchor="end" fill="#5e5e5e">0</text><text x="120.7" y="84.1" font-size="10.700" text-anchor="end" fill="#5e5e5e">2500</text><text x="120.7" y="62.7" font-size="10.700" text-anchor="end" fill="#5e5e5e">5000</text><text x="120.7" y="41.3" font-size="10.700" text-anchor="end" fill="#5e5e5e">7500</text><text x="120.7" y="19.9" font-size="10.700" text-anchor="end" fill="#5e5e5e">10000</text><text x="124.6" y="116.0" font-size="10.700" text-anchor="middle" fill="#5e5e5e">0</text><text x="163.2" y="116.0" font-size="10.700" text-anchor="middle" fill="#5e5e5e">20</text><text x="201.7" y="116.0" font-size="10.700" text-anchor="middle" fill="#5e5e5e">40</text><text x="240.3" y="116.0" font-size="10.700" text-anchor="middle" fill="#5e5e5e">60</text><text x="278.8" y="116.0" font-size="10.700" text-anchor="middle" fill="#5e5e5e">80</text><text x="317.4" y="116.0" font-size="10.700" text-anchor="middle" fill="#5e5e5e">100</text><text x="356.0" y="116.0" font-size="10.700" text-anchor="middle" fill="#5e5e5e">120</text><rect x="284.0" y="24.0" width="13.800" height="10.800" fill="#fff" stroke="#b9b9b9" stroke-width="0.800"/><rect x="285.7" y="25.7" width="10.400" height="7.400" fill="#0000ff"/><text x="301.8" y="33.3" font-size="10.600" fill="#8a8a8a">aida03 Rate</text><path d="M371.4 6.1L381.4 16.1L371.4 26.1L361.4 16.1Z" fill="#ff0000"/></svg>
<svg class="abs" style="left:1437px;top:423px" width="475" height="120" viewBox="0 0 475 120" font-family="DejaVu Serif, Liberation Serif, serif"><clipPath id="cp3"><rect x="124.4" y="16.3" width="250.2" height="87.3"/></clipPath><path d="M163.5 15.5V101.8M202.0 15.5V101.8M240.6 15.5V101.8M279.1 15.5V101.8M317.7 15.5V101.8M356.3 15.5V101.8M124.4 80.1H374.6M124.4 58.7H374.6M124.4 37.3H374.6" stroke="#e9e9e9" stroke-width="1" fill="none"/><rect x="124.4" y="15.5" width="250.2" height="86.3" fill="none" stroke="#7f7f7f" stroke-width="1.6"/><path d="M124.9 101.5H126.8V63.2H128.8V45.8H130.7V12.5H132.6V59.0H134.5V65.7H136.5V67.3H138.4V65.7H140.3V12.5H142.3V69.8H144.2V72.8H146.1V73.5H148.0V75.7H150.0V76.8H151.9V75.0H153.8V88.7H155.7V75.0H157.7V101.5H159.6H161.5H163.5H165.4H167.3H169.2H171.2H173.1H175.0H177.0H178.9H180.8H182.7H184.7H186.6H188.5V82.0H190.5V83.7H192.4V79.0H194.3V92.7H196.2V91.1H198.2V90.7H200.1V95.7H202.0V96.9H203.9V95.7H205.9V95.2H207.8V96.2H209.7V96.9H211.7V97.3H213.6V97.8H215.5H217.4V98.2H219.4V101.5H221.3H223.2H225.2H227.1H229.0H230.9H232.9H234.8H236.7H238.7H240.6H242.5H244.4H246.4H248.3H250.2V97.8H252.1V98.0H254.1H256.0H257.9V98.2H259.9V97.2H261.8V98.1H263.7V98.3H265.6V98.5H267.6V98.3H269.5V97.8H271.4V98.5H273.4V98.7H275.3V98.5H277.2H279.1V98.8H281.1V101.5H283.0H284.9H286.9H288.8H290.7H292.6H294.6H296.5H298.4H300.3H302.3H304.2H306.1H308.1H310.0H311.9V98.7H313.8V97.8H315.8V98.2H317.7V97.8H319.6V98.2H321.6V98.7H323.5V97.8H325.4V39.1H327.3V98.2H329.3V97.8H331.2V95.7H333.1V98.2H335.1V98.5H337.0V92.9H338.9V97.8H340.8V98.2H342.8V101.5H344.7H346.6H348.5H350.5H352.4H354.3H356.3H358.2H360.1H362.0H364.0H365.9H367.8H369.8H371.7" stroke="#4a4aff" stroke-width="1.050" fill="none" stroke-linejoin="round" clip-path="url(#cp3)"/><text x="121.0" y="105.5" font-size="10.700" text-anchor="end" fill="#5e5e5e">0</text><text x="121.0" y="84.1" font-size="10.700" text-anchor="end" fill="#5e5e5e">2500</text><text x="121.0" y="62.7" font-size="10.700" text-anchor="end" fill="#5e5e5e">5000</text><text x="121.0" y="41.3" font-size="10.700" text-anchor="end" fill="#5e5e5e">7500</text><text x="121.0" y="19.9" font-size="10.700" text-anchor="end" fill="#5e5e5e">10000</text><text x="124.9" y="116.0" font-size="10.700" text-anchor="middle" fill="#5e5e5e">0</text><text x="163.5" y="116.0" font-size="10.700" text-anchor="middle" fill="#5e5e5e">20</text><text x="202.0" y="116.0" font-size="10.700" text-anchor="middle" fill="#5e5e5e">40</text><text x="240.6" y="116.0" font-size="10.700" text-anchor="middle" fill="#5e5e5e">60</text><text x="279.1" y="116.0" font-size="10.700" text-anchor="middle" fill="#5e5e5e">80</text><text x="317.7" y="116.0" font-size="10.700" text-anchor="middle" fill="#5e5e5e">100</text><text x="356.3" y="116.0" font-size="10.700" text-anchor="middle" fill="#5e5e5e">120</text><rect x="284.3" y="24.0" width="13.800" height="10.800" fill="#fff" stroke="#b9b9b9" stroke-width="0.800"/><rect x="286.0" y="25.7" width="10.400" height="7.400" fill="#0000ff"/><text x="302.1" y="33.3" font-size="10.600" fill="#8a8a8a">aida04 Rate</text><path d="M371.7 6.1L381.7 16.1L371.7 26.1L361.7 16.1Z" fill="#ff0000"/></svg>
<svg class="abs" style="left:8px;top:545px" width="475" height="120" viewBox="0 0 475 120" font-family="DejaVu Serif, Liberation Serif, serif"><clipPath id="cp4"><rect x="124.8" y="16.3" width="250.2" height="87.3"/></clipPath><path d="M163.9 15.5V101.8M202.4 15.5V101.8M241.0 15.5V101.8M279.5 15.5V101.8M318.1 15.5V101.8M356.7 15.5V101.8M124.8 80.1H375.0M124.8 58.7H375.0M124.8 37.3H375.0" stroke="#e9e9e9" stroke-width="1" fill="none"/><rect x="124.8" y="15.5" width="250.2" height="86.3" fill="none" stroke="#7f7f7f" stroke-width="1.6"/><path d="M125.3 101.5H127.2V96.5H129.2V43.3H131.1V96.9H133.0V94.8H134.9V76.2H136.9V97.0H138.8V97.3H140.7V97.8H142.7V98.2H144.6V97.3H146.5V98.2H148.4V98.7H150.4V97.3H152.3V98.5H154.2V98.2H156.1V97.8H158.1V101.5H160.0H161.9H163.9H165.8H167.7H169.6H171.6H173.5H175.4H177.4H179.3H181.2H183.1H185.1H187.0H188.9V97.6H190.9V97.2H192.8V97.0H194.7V98.3H196.6V98.0H198.6V97.8H200.5H202.4V97.6H204.3V97.8H206.3V98.0H208.2V98.3H210.1V98.5H212.1V98.2H214.0V97.8H215.9V98.0H217.8V98.7H219.8V101.5H221.7H223.6H225.6H227.5H229.4H231.3H233.3H235.2H237.1H239.1H241.0H242.9H244.8H246.8H248.7H250.6V96.5H252.5V97.0H254.5V96.5H256.4V97.8H258.3V97.3H260.3V96.2H262.2V96.5H264.1V95.2H266.0V96.9H268.0V97.8H269.9V94.8H271.8V95.7H273.8V96.5H275.7V98.2H277.6V97.8H279.5V98.2H281.5V101.5H283.4H285.3H287.3H289.2H291.1H293.0H295.0H296.9H298.8H300.7H302.7H304.6H306.5H308.5H310.4H312.3V97.8H314.2V95.2H316.2V97.3H318.1V96.2H320.0V95.7H322.0H323.9V96.9H325.8V18.3H327.7V97.0H329.7V97.3H331.6V93.7H333.5V98.5H335.5V99.0H337.4V81.2H339.3V98.5H341.2V99.0H343.2V101.5H345.1H347.0H348.9H350.9H352.8H354.7H356.7H358.6H360.5H362.4H364.4H366.3H368.2H370.2H372.1" stroke="#4a4aff" stroke-width="1.050" fill="none" stroke-linejoin="round" clip-path="url(#cp4)"/><text x="121.4" y="105.5" font-size="10.700" text-anchor="end" fill="#5e5e5e">0</text><text x="121.4" y="84.1" font-size="10.700" text-anchor="end" fill="#5e5e5e">2500</text><text x="121.4" y="62.7" font-size="10.700" text-anchor="end" fill="#5e5e5e">5000</text><text x="121.4" y="41.3" font-size="10.700" text-anchor="end" fill="#5e5e5e">7500</text><text x="121.4" y="19.9" font-size="10.700" text-anchor="end" fill="#5e5e5e">10000</text><text x="125.3" y="116.0" font-size="10.700" text-anchor="middle" fill="#5e5e5e">0</text><text x="163.9" y="116.0" font-size="10.700" text-anchor="middle" fill="#5e5e5e">20</text><text x="202.4" y="116.0" font-size="10.700" text-anchor="middle" fill="#5e5e5e">40</text><text x="241.0" y="116.0" font-size="10.700" text-anchor="middle" fill="#5e5e5e">60</text><text x="279.5" y="116.0" font-size="10.700" text-anchor="middle" fill="#5e5e5e">80</text><text x="318.1" y="116.0" font-size="10.700" text-anchor="middle" fill="#5e5e5e">100</text><text x="356.7" y="116.0" font-size="10.700" text-anchor="middle" fill="#5e5e5e">120</text><rect x="284.7" y="24.0" width="13.800" height="10.800" fill="#fff" stroke="#b9b9b9" stroke-width="0.800"/><rect x="286.4" y="25.7" width="10.400" height="7.400" fill="#0000ff"/><text x="302.5" y="33.3" font-size="10.600" fill="#8a8a8a">aida05 Rate</text><path d="M372.1 6.1L382.1 16.1L372.1 26.1L362.1 16.1Z" fill="#ff0000"/></svg>
<svg class="abs" style="left:485px;top:545px" width="475" height="120" viewBox="0 0 475 120" font-family="DejaVu Serif, Liberation Serif, serif"><clipPath id="cp5"><rect x="123.7" y="16.3" width="250.2" height="87.3"/></clipPath><path d="M162.8 15.5V101.8M201.3 15.5V101.8M239.9 15.5V101.8M278.4 15.5V101.8M317.0 15.5V101.8M355.6 15.5V101.8M123.7 80.1H373.9M123.7 58.7H373.9M123.7 37.3H373.9" stroke="#e9e9e9" stroke-width="1" fill="none"/><rect x="123.7" y="15.5" width="250.2" height="86.3" fill="none" stroke="#7f7f7f" stroke-width="1.6"/><path d="M124.2 101.5H126.1V20.8H128.1V12.5H130.0V34.1H131.9V45.8H133.8V20.8H135.8V62.4H137.7V51.3H139.6V60.8H141.6V75.7H143.5V69.6H145.4V73.5H147.3V60.2H149.3V79.1H151.2V81.6H153.1V79.1H155.0V84.4H157.0V101.5H158.9H160.8H162.8H164.7H166.6H168.5H170.5H172.4H174.3H176.3H178.2H180.1H182.0H184.0H185.9H187.8V80.4H189.8V81.9H191.7V82.3H193.6V86.5H195.5V87.4H197.5V89.0H199.4V89.5H201.3V90.2H203.2V92.0H205.2V87.9H207.1V90.7H209.0V89.0H211.0V92.3H212.9V93.7H214.8V94.1H216.7V92.9H218.7V101.5H220.6H222.5H224.5H226.4H228.3H230.2H232.2H234.1H236.0H238.0H239.9H241.8H243.7H245.7H247.6H249.5V88.5H251.4V90.7H253.4V90.2H255.3V91.1H257.2V92.7H259.2V92.0H261.1V94.1H263.0V93.2H264.9H266.9V92.0H268.8V93.7H270.7V94.8H272.7V93.7H274.6V92.9H276.5H278.4V94.1H280.4V101.5H282.3H284.2H286.2H288.1H290.0H291.9H293.9H295.8H297.7H299.6H301.6H303.5H305.4H307.4H309.3H311.2V91.5H313.1V92.9H315.1V93.2H317.0V93.7H318.9V94.8H320.9V94.5H322.8H324.7V47.9H326.6V94.8H328.6V94.1H330.5V93.5H332.4V94.8H334.4H336.3V86.0H338.2V93.7H340.1V94.1H342.1V101.5H344.0H345.9H347.8H349.8H351.7H353.6H355.6H357.5H359.4H361.3H363.3H365.2H367.1H369.1H371.0" stroke="#4a4aff" stroke-width="1.050" fill="none" stroke-linejoin="round" clip-path="url(#cp5)"/><text x="120.3" y="105.5" font-size="10.700" text-anchor="end" fill="#5e5e5e">0</text><text x="120.3" y="84.1" font-size="10.700" text-anchor="end" fill="#5e5e5e">2500</text><text x="120.3" y="62.7" font-size="10.700" text-anchor="end" fill="#5e5e5e">5000</text><text x="120.3" y="41.3" font-size="10.700" text-anchor="end" fill="#5e5e5e">7500</text><text x="120.3" y="19.9" font-size="10.700" text-anchor="end" fill="#5e5e5e">10000</text><text x="124.2" y="116.0" font-size="10.700" text-anchor="middle" fill="#5e5e5e">0</text><text x="162.8" y="116.0" font-size="10.700" text-anchor="middle" fill="#5e5e5e">20</text><text x="201.3" y="116.0" font-size="10.700" text-anchor="middle" fill="#5e5e5e">40</text><text x="239.9" y="116.0" font-size="10.700" text-anchor="middle" fill="#5e5e5e">60</text><text x="278.4" y="116.0" font-size="10.700" text-anchor="middle" fill="#5e5e5e">80</text><text x="317.0" y="116.0" font-size="10.700" text-anchor="middle" fill="#5e5e5e">100</text><text x="355.6" y="116.0" font-size="10.700" text-anchor="middle" fill="#5e5e5e">120</text><rect x="283.6" y="24.0" width="13.800" height="10.800" fill="#fff" stroke="#b9b9b9" stroke-width="0.800"/><rect x="285.3" y="25.7" width="10.400" height="7.400" fill="#0000ff"/><text x="301.4" y="33.3" font-size="10.600" fill="#8a8a8a">aida06 Rate</text><path d="M371.0 6.1L381.0 16.1L371.0 26.1L361.0 16.1Z" fill="#ff0000"/></svg>
<svg class="abs" style="left:961px;top:545px" width="475" height="120" viewBox="0 0 475 120" font-family="DejaVu Serif, Liberation Serif, serif"><clipPath id="cp6"><rect x="124.0" y="16.3" width="250.2" height="87.3"/></clipPath><path d="M163.2 15.5V101.8M201.7 15.5V101.8M240.3 15.5V101.8M278.8 15.5V101.8M317.4 15.5V101.8M356.0 15.5V101.8M124.0 80.1H374.3M124.0 58.7H374.3M124.0 37.3H374.3" stroke="#e9e9e9" stroke-width="1" fill="none"/><rect x="124.0" y="15.5" width="250.2" height="86.3" fill="none" stroke="#7f7f7f" stroke-width="1.6"/><path d="M124.6 101.5H126.5V96.9H128.5V12.5H130.4V98.7H132.3V97.8H134.2V47.7H136.2V98.5H138.1H140.0V98.3H142.0V98.2H143.9V99.0H145.8V98.5H147.7V98.8H149.7H151.6H153.5H155.4V99.0H157.4V101.5H159.3H161.2H163.2H165.1H167.0H168.9H170.9H172.8H174.7H176.7H178.6H180.5H182.4H184.4H186.3H188.2V98.0H190.2V98.7H192.1V97.8H194.0V98.7H195.9V98.8H197.9V98.2H199.8V98.8H201.7V99.0H203.6V98.5H205.6V99.0H207.5V98.8H209.4V99.0H211.4H213.3V98.8H215.2V98.7H217.1V99.0H219.1V101.5H221.0H222.9H224.9H226.8H228.7H230.6H232.6H234.5H236.4H238.4H240.3H242.2H244.1H246.1H248.0H249.9V98.0H251.8V98.8H253.8V99.2H255.7V98.8H257.6V98.5H259.6V98.7H261.5V98.8H263.4V99.2H265.3V99.4H267.3H269.2V99.0H271.1V98.8H273.1V99.0H275.0V98.8H276.9V99.2H278.8V99.4H280.8V101.5H282.7H284.6H286.6H288.5H290.4H292.3H294.3H296.2H298.1H300.0H302.0H303.9H305.8H307.8H309.7H311.6V98.7H313.5V98.8H315.5H317.4H319.3V99.0H321.3V98.8H323.2V98.7H325.1V28.2H327.0V98.8H329.0V99.4H330.9V98.8H332.8V98.5H334.8V98.8H336.7V72.8H338.6V99.0H340.5V99.4H342.5V101.5H344.4H346.3H348.2H350.2H352.1H354.0H356.0H357.9H359.8H361.7H363.7H365.6H367.5H369.5H371.4" stroke="#4a4aff" stroke-width="1.050" fill="none" stroke-linejoin="round" clip-path="url(#cp6)"/><text x="120.7" y="105.5" font-size="10.700" text-anchor="end" fill="#5e5e5e">0</text><text x="120.7" y="84.1" font-size="10.700" text-anchor="end" fill="#5e5e5e">2500</text><text x="120.7" y="62.7" font-size="10.700" text-anchor="end" fill="#5e5e5e">5000</text><text x="120.7" y="41.3" font-size="10.700" text-anchor="end" fill="#5e5e5e">7500</text><text x="120.7" y="19.9" font-size="10.700" text-anchor="end" fill="#5e5e5e">10000</text><text x="124.6" y="116.0" font-size="10.700" text-anchor="middle" fill="#5e5e5e">0</text><text x="163.2" y="116.0" font-size="10.700" text-anchor="middle" fill="#5e5e5e">20</text><text x="201.7" y="116.0" font-size="10.700" text-anchor="middle" fill="#5e5e5e">40</text><text x="240.3" y="116.0" font-size="10.700" text-anchor="middle" fill="#5e5e5e">60</text><text x="278.8" y="116.0" font-size="10.700" text-anchor="middle" fill="#5e5e5e">80</text><text x="317.4" y="116.0" font-size="10.700" text-anchor="middle" fill="#5e5e5e">100</text><text x="356.0" y="116.0" font-size="10.700" text-anchor="middle" fill="#5e5e5e">120</text><rect x="284.0" y="24.0" width="13.800" height="10.800" fill="#fff" stroke="#b9b9b9" stroke-width="0.800"/><rect x="285.7" y="25.7" width="10.400" height="7.400" fill="#0000ff"/><text x="301.8" y="33.3" font-size="10.600" fill="#8a8a8a">aida07 Rate</text><path d="M371.4 6.1L381.4 16.1L371.4 26.1L361.4 16.1Z" fill="#ff0000"/></svg>
<svg class="abs" style="left:1437px;top:545px" width="475" height="120" viewBox="0 0 475 120" font-family="DejaVu Serif, Liberation Serif, serif"><clipPath id="cp7"><rect x="124.4" y="16.3" width="250.2" height="87.3"/></clipPath><path d="M163.5 15.5V101.8M202.0 15.5V101.8M240.6 15.5V101.8M279.1 15.5V101.8M317.7 15.5V101.8M356.3 15.5V101.8M124.4 80.1H374.6M124.4 58.7H374.6M124.4 37.3H374.6" stroke="#e9e9e9" stroke-width="1" fill="none"/><rect x="124.4" y="15.5" width="250.2" height="86.3" fill="none" stroke="#7f7f7f" stroke-width="1.6"/><path d="M124.9 101.5H126.8V68.7H128.8V51.6H130.7V84.0H132.6V82.3H134.5V81.6H136.5V87.7H138.4V89.5H140.3V84.4H142.3V83.2H144.2V88.5H146.1V89.0H148.0V89.9H150.0V90.7H151.9V87.7H153.8V89.9H155.7V87.0H157.7V101.5H159.6H161.5H163.5H165.4H167.3H169.2H171.2H173.1H175.0H177.0H178.9H180.8H182.7H184.7H186.6H188.5V89.3H190.5V92.3H192.4V87.9H194.3V85.3H196.2V89.0H198.2V87.9H200.1V83.7H202.0V89.5H203.9V87.9H205.9V91.8H207.8V84.0H209.7H211.7V85.7H213.6V74.9H215.5V74.0H217.4V86.5H219.4V101.5H221.3H223.2H225.2H227.1H229.0H230.9H232.9H234.8H236.7H238.7H240.6H242.5H244.4H246.4H248.3H250.2V72.8H252.1V54.6H254.1V77.9H256.0V65.4H257.9V41.2H259.9V52.4H261.8V46.1H263.7V69.6H265.6V27.5H267.6V24.1H269.5V46.5H271.4V17.4H273.4V16.3H275.3V29.9H277.2V26.3H279.1V19.9H281.1V101.5H283.0H284.9H286.9H288.8V81.6H290.7V101.5H292.6H294.6H296.5H298.4H300.3H302.3H304.2H306.1H308.1H310.0H311.9V12.5H313.8H315.8V20.8H317.7V22.4H319.6V26.9H321.6V20.8H323.5V12.5H325.4V29.6H327.3V24.5H329.3V22.4H331.2V20.8H333.1V37.0H335.1V31.6H337.0V12.5H338.9V29.1H340.8V26.6H342.8V101.5H344.7H346.6H348.5H350.5H352.4H354.3H356.3H358.2H360.1H362.0H364.0H365.9H367.8H369.8H371.7" stroke="#4a4aff" stroke-width="1.050" fill="none" stroke-linejoin="round" clip-path="url(#cp7)"/><text x="121.0" y="105.5" font-size="10.700" text-anchor="end" fill="#5e5e5e">0</text><text x="121.0" y="84.1" font-size="10.700" text-anchor="end" fill="#5e5e5e">2500</text><text x="121.0" y="62.7" font-size="10.700" text-anchor="end" fill="#5e5e5e">5000</text><text x="121.0" y="41.3" font-size="10.700" text-anchor="end" fill="#5e5e5e">7500</text><text x="121.0" y="19.9" font-size="10.700" text-anchor="end" fill="#5e5e5e">10000</text><text x="124.9" y="116.0" font-size="10.700" text-anchor="middle" fill="#5e5e5e">0</text><text x="163.5" y="116.0" font-size="10.700" text-anchor="middle" fill="#5e5e5e">20</text><text x="202.0" y="116.0" font-size="10.700" text-anchor="middle" fill="#5e5e5e">40</text><text x="240.6" y="116.0" font-size="10.700" text-anchor="middle" fill="#5e5e5e">60</text><text x="279.1" y="116.0" font-size="10.700" text-anchor="middle" fill="#5e5e5e">80</text><text x="317.7" y="116.0" font-size="10.700" text-anchor="middle" fill="#5e5e5e">100</text><text x="356.3" y="116.0" font-size="10.700" text-anchor="middle" fill="#5e5e5e">120</text><rect x="284.3" y="24.0" width="13.800" height="10.800" fill="#fff" stroke="#b9b9b9" stroke-width="0.800"/><rect x="286.0" y="25.7" width="10.400" height="7.400" fill="#0000ff"/><text x="302.1" y="33.3" font-size="10.600" fill="#8a8a8a">aida08 Rate</text><path d="M371.7 6.1L381.7 16.1L371.7 26.1L361.7 16.1Z" fill="#ff0000"/></svg>
<svg class="abs" style="left:8px;top:667px" width="475" height="120" viewBox="0 0 475 120" font-family="DejaVu Serif, Liberation Serif, serif"><clipPath id="cp8"><rect x="124.8" y="16.3" width="250.2" height="87.3"/></clipPath><path d="M163.9 15.5V101.8M202.4 15.5V101.8M241.0 15.5V101.8M279.5 15.5V101.8M318.1 15.5V101.8M356.7 15.5V101.8M124.8 80.1H375.0M124.8 58.7H375.0M124.8 37.3H375.0" stroke="#e9e9e9" stroke-width="1" fill="none"/><rect x="124.8" y="15.5" width="250.2" height="86.3" fill="none" stroke="#7f7f7f" stroke-width="1.6"/><path d="M125.3 101.5H127.2V99.0H129.2V78.2H131.1V98.7H133.0V98.2H134.9V93.2H136.9V98.9H138.8H140.7H142.7V99.0H144.6H146.5V99.1H148.4H150.4V99.2H152.3H154.2H156.1H158.1V101.5H160.0H161.9H163.9H165.8H167.7H169.6H171.6H173.5H175.4H177.4H179.3H181.2H183.1H185.1H187.0H188.9V99.0H190.9V98.9H192.8V99.0H194.7V99.1H196.6H198.6V99.2H200.5H202.4V99.3H204.3V99.2H206.3H208.2V99.1H210.1V99.0H212.1V98.9H214.0V99.0H215.9V99.2H217.8V99.4H219.8V101.5H221.7H223.6H225.6H227.5H229.4H231.3H233.3H235.2H237.1H239.1H241.0H242.9H244.8H246.8H248.7H250.6V99.0H252.5V99.1H254.5V99.3H256.4V99.2H258.3V99.0H260.3V99.1H262.2H264.1H266.0H268.0H269.9V99.2H271.8H273.8H275.7H277.6V99.1H279.5V98.2H281.5V101.5H283.4H285.3H287.3H289.2H291.1H293.0H295.0H296.9H298.8H300.7H302.7H304.6H306.5H308.5H310.4H312.3V96.2H314.2V97.3H316.2V98.2H318.1V96.2H320.0V96.9H322.0H323.9V96.0H325.8V56.0H327.7V96.9H329.7V94.1H331.6V96.9H333.5V96.2H335.5V96.5H337.4V12.5H339.3V96.2H341.2V96.9H343.2V101.5H345.1H347.0H348.9H350.9H352.8H354.7H356.7H358.6H360.5H362.4H364.4H366.3H368.2H370.2H372.1" stroke="#4a4aff" stroke-width="1.050" fill="none" stroke-linejoin="round" clip-path="url(#cp8)"/><text x="121.4" y="105.5" font-size="10.700" text-anchor="end" fill="#5e5e5e">0</text><text x="121.4" y="84.1" font-size="10.700" text-anchor="end" fill="#5e5e5e">2500</text><text x="121.4" y="62.7" font-size="10.700" text-anchor="end" fill="#5e5e5e">5000</text><text x="121.4" y="41.3" font-size="10.700" text-anchor="end" fill="#5e5e5e">7500</text><text x="121.4" y="19.9" font-size="10.700" text-anchor="end" fill="#5e5e5e">10000</text><text x="125.3" y="116.0" font-size="10.700" text-anchor="middle" fill="#5e5e5e">0</text><text x="163.9" y="116.0" font-size="10.700" text-anchor="middle" fill="#5e5e5e">20</text><text x="202.4" y="116.0" font-size="10.700" text-anchor="middle" fill="#5e5e5e">40</text><text x="241.0" y="116.0" font-size="10.700" text-anchor="middle" fill="#5e5e5e">60</text><text x="279.5" y="116.0" font-size="10.700" text-anchor="middle" fill="#5e5e5e">80</text><text x="318.1" y="116.0" font-size="10.700" text-anchor="middle" fill="#5e5e5e">100</text><text x="356.7" y="116.0" font-size="10.700" text-anchor="middle" fill="#5e5e5e">120</text><rect x="284.7" y="24.0" width="13.800" height="10.800" fill="#fff" stroke="#b9b9b9" stroke-width="0.800"/><rect x="286.4" y="25.7" width="10.400" height="7.400" fill="#0000ff"/><text x="302.5" y="33.3" font-size="10.600" fill="#8a8a8a">aida09 Rate</text><path d="M372.1 6.1L382.1 16.1L372.1 26.1L362.1 16.1Z" fill="#ff0000"/></svg>
<svg class="abs" style="left:485px;top:667px" width="475" height="120" viewBox="0 0 475 120" font-family="DejaVu Serif, Liberation Serif, serif"><clipPath id="cp9"><rect x="123.7" y="16.3" width="250.2" height="87.3"/></clipPath><path d="M162.8 15.5V101.8M201.3 15.5V101.8M239.9 15.5V101.8M278.4 15.5V101.8M317.0 15.5V101.8M355.6 15.5V101.8M123.7 80.1H373.9M123.7 58.7H373.9M123.7 37.3H373.9" stroke="#e9e9e9" stroke-width="1" fill="none"/><rect x="123.7" y="15.5" width="250.2" height="86.3" fill="none" stroke="#7f7f7f" stroke-width="1.6"/><path d="M124.2 101.5H126.1V12.5H128.1H130.0H131.9H133.8H135.8V22.9H137.7V12.5H139.6H141.6V47.9H143.5V30.8H145.4V36.1H147.3V27.1H149.3V47.9H151.2V47.4H153.1V49.4H155.0V58.2H157.0V101.5H158.9H160.8H162.8H164.7H166.6H168.5H170.5H172.4H174.3H176.3H178.2H180.1H182.0H184.0H185.9H187.8V24.9H189.8V36.5H191.7V32.9H193.6V46.0H195.5V50.7H197.5V45.3H199.4V67.0H201.3V57.8H203.2V64.9H205.2V51.6H207.1V69.1H209.0V71.9H211.0V59.0H212.9V76.0H214.8V78.2H216.7V81.0H218.7V101.5H220.6H222.5H224.5H226.4H228.3H230.2H232.2H234.1H236.0H238.0H239.9H241.8H243.7H245.7H247.6H249.5V52.0H251.4V72.1H253.4V81.0H255.3H257.2V91.1H259.2V84.0H261.1V86.5H263.0V88.7H264.9V94.8H266.9V92.0H268.8V94.5H270.7H272.7V93.5H274.6V94.8H276.5V95.7H278.4V94.5H280.4V101.5H282.3H284.2H286.2H288.1H290.0H291.9H293.9H295.8H297.7H299.6H301.6H303.5H305.4H307.4H309.3H311.2V92.0H313.1V91.8H315.1V92.0H317.0V96.2H318.9V94.1H320.9V97.6H322.8V95.2H324.7V64.9H326.6V96.5H328.6V97.3H330.5V97.8H332.4V98.5H334.4V99.5H336.3V91.8H338.2V97.6H340.1V96.2H342.1V101.5H344.0H345.9H347.8H349.8H351.7H353.6H355.6H357.5H359.4H361.3H363.3H365.2H367.1H369.1H371.0" stroke="#4a4aff" stroke-width="1.050" fill="none" stroke-linejoin="round" clip-path="url(#cp9)"/><text x="120.3" y="105.5" font-size="10.700" text-anchor="end" fill="#5e5e5e">0</text><text x="120.3" y="84.1" font-size="10.700" text-anchor="end" fill="#5e5e5e">2500</text><text x="120.3" y="62.7" font-size="10.700" text-anchor="end" fill="#5e5e5e">5000</text><text x="120.3" y="41.3" font-size="10.700" text-anchor="end" fill="#5e5e5e">7500</text><text x="120.3" y="19.9" font-size="10.700" text-anchor="end" fill="#5e5e5e">10000</text><text x="124.2" y="116.0" font-size="10.700" text-anchor="middle" fill="#5e5e5e">0</text><text x="162.8" y="116.0" font-size="10.700" text-anchor="middle" fill="#5e5e5e">20</text><text x="201.3" y="116.0" font-size="10.700" text-anchor="middle" fill="#5e5e5e">40</text><text x="239.9" y="116.0" font-size="10.700" text-anchor="middle" fill="#5e5e5e">60</text><text x="278.4" y="116.0" font-size="10.700" text-anchor="middle" fill="#5e5e5e">80</text><text x="317.0" y="116.0" font-size="10.700" text-anchor="middle" fill="#5e5e5e">100</text><text x="355.6" y="116.0" font-size="10.700" text-anchor="middle" fill="#5e5e5e">120</text><rect x="283.6" y="24.0" width="13.800" height="10.800" fill="#fff" stroke="#b9b9b9" stroke-width="0.800"/><rect x="285.3" y="25.7" width="10.400" height="7.400" fill="#0000ff"/><text x="301.4" y="33.3" font-size="10.600" fill="#8a8a8a">aida10 Rate</text><path d="M371.0 6.1L381.0 16.1L371.0 26.1L361.0 16.1Z" fill="#ff0000"/></svg>
<svg class="abs" style="left:961px;top:667px" width="475" height="120" viewBox="0 0 475 120" font-family="DejaVu Serif, Liberation Serif, serif"><clipPath id="cp10"><rect x="124.0" y="16.3" width="250.2" height="87.3"/></clipPath><path d="M163.2 15.5V101.8M201.7 15.5V101.8M240.3 15.5V101.8M278.8 15.5V101.8M317.4 15.5V101.8M356.0 15.5V101.8M124.0 80.1H374.3M124.0 58.7H374.3M124.0 37.3H374.3" stroke="#e9e9e9" stroke-width="1" fill="none"/><rect x="124.0" y="15.5" width="250.2" height="86.3" fill="none" stroke="#7f7f7f" stroke-width="1.6"/><path d="M124.6 101.5H126.5V89.9H128.5V12.5H130.4V97.8H132.3H134.2V26.6H136.2V97.0H138.1V98.7H140.0H142.0V96.0H143.9V98.7H145.8V97.6H147.7V98.7H149.7H151.6V97.8H153.5V99.4H155.4V99.9H157.4V101.5H159.3H161.2H163.2H165.1H167.0H168.9H170.9H172.8H174.7H176.7H178.6H180.5H182.4H184.4H186.3H188.2V91.1H190.2V92.0H192.1V87.0H194.0V91.5H195.9V94.5H197.9V85.7H199.8V87.9H201.7V96.9H203.6V94.1H205.6V95.2H207.5V92.0H209.4V94.3H211.4V96.5H213.3V89.0H215.2V88.2H217.1V96.2H219.1V101.5H221.0H222.9H224.9H226.8H228.7H230.6H232.6H234.5H236.4H238.4H240.3H242.2H244.1H246.1H248.0H249.9V78.7H251.8V82.0H253.8V84.9H255.7V79.3H257.6V84.0H259.6V90.7H261.5V81.0H263.4V81.6H265.3V83.7H267.3V78.2H269.2V88.5H271.1V84.9H273.1V83.2H275.0V92.0H276.9V86.5H278.8V83.2H280.8V101.5H282.7H284.6H286.6H288.5H290.4H292.3H294.3H296.2H298.1H300.0H302.0H303.9H305.8H307.8H309.7H311.6V82.8H313.5V82.0H315.5V72.1H317.4V87.0H319.3V63.2H321.3V72.8H323.2V82.7H325.1V12.5H327.0V83.2H329.0V76.0H330.9V79.3H332.8V87.7H334.8H336.7V46.0H338.6V88.2H340.5V82.3H342.5V101.5H344.4H346.3H348.2H350.2H352.1H354.0H356.0H357.9H359.8H361.7H363.7H365.6H367.5H369.5H371.4" stroke="#4a4aff" stroke-width="1.050" fill="none" stroke-linejoin="round" clip-path="url(#cp10)"/><text x="120.7" y="105.5" font-size="10.700" text-anchor="end" fill="#5e5e5e">0</text><text x="120.7" y="84.1" font-size="10.700" text-anchor="end" fill="#5e5e5e">2500</text><text x="120.7" y="62.7" font-size="10.700" text-anchor="end" fill="#5e5e5e">5000</text><text x="120.7" y="41.3" font-size="10.700" text-anchor="end" fill="#5e5e5e">7500</text><text x="120.7" y="19.9" font-size="10.700" text-anchor="end" fill="#5e5e5e">10000</text><text x="124.6" y="116.0" font-size="10.700" text-anchor="middle" fill="#5e5e5e">0</text><text x="163.2" y="116.0" font-size="10.700" text-anchor="middle" fill="#5e5e5e">20</text><text x="201.7" y="116.0" font-size="10.700" text-anchor="middle" fill="#5e5e5e">40</text><text x="240.3" y="116.0" font-size="10.700" text-anchor="middle" fill="#5e5e5e">60</text><text x="278.8" y="116.0" font-size="10.700" text-anchor="middle" fill="#5e5e5e">80</text><text x="317.4" y="116.0" font-size="10.700" text-anchor="middle" fill="#5e5e5e">100</text><text x="356.0" y="116.0" font-size="10.700" text-anchor="middle" fill="#5e5e5e">120</text><rect x="284.0" y="24.0" width="13.800" height="10.800" fill="#fff" stroke="#b9b9b9" stroke-width="0.800"/><rect x="285.7" y="25.7" width="10.400" height="7.400" fill="#0000ff"/><text x="301.8" y="33.3" font-size="10.600" fill="#8a8a8a">aida11 Rate</text><path d="M371.4 6.1L381.4 16.1L371.4 26.1L361.4 16.1Z" fill="#ff0000"/></svg>
<svg class="abs" style="left:1437px;top:667px" width="475" height="120" viewBox="0 0 475 120" font-family="DejaVu Serif, Liberation Serif, serif"><clipPath id="cp11"><rect x="124.4" y="16.3" width="250.2" height="87.3"/></clipPath><path d="M163.5 15.5V101.8M202.0 15.5V101.8M240.6 15.5V101.8M279.1 15.5V101.8M317.7 15.5V101.8M356.3 15.5V101.8M124.4 80.1H374.6M124.4 58.7H374.6M124.4 37.3H374.6" stroke="#e9e9e9" stroke-width="1" fill="none"/><rect x="124.4" y="15.5" width="250.2" height="86.3" fill="none" stroke="#7f7f7f" stroke-width="1.6"/><path d="M124.9 101.5H126.8V96.9H128.8V79.5H130.7V94.8H132.6V98.7H134.5V87.9H136.5V98.5H138.4V98.2H140.3V97.3H142.3V99.4H144.2V96.5H146.1V98.5H148.0V98.2H150.0V99.0H151.9V99.9H153.8V99.0H155.7V99.9H157.7V101.5H159.6H161.5H163.5H165.4H167.3H169.2H171.2H173.1H175.0H177.0H178.9H180.8H182.7H184.7H186.6H188.5V98.7H190.5V98.5H192.4H194.3V98.7H196.2V98.2H198.2V99.0H200.1V99.5H202.0V99.0H203.9V98.7H205.9V97.8H207.8V99.4H209.7V98.7H211.7V98.5H213.6V95.7H215.5V99.9H217.4V96.9H219.4V101.5H221.3H223.2H225.2H227.1H229.0H230.9H232.9H234.8H236.7H238.7H240.6H242.5H244.4H246.4H248.3H250.2V96.9H252.1V99.5H254.1V96.9H256.0V99.5H257.9V99.9H259.9V99.5H261.8V99.9H263.7V97.8H265.6V99.5H267.6V99.0H269.5H271.4V98.7H273.4V99.9H275.3V99.0H277.2V99.9H279.1H281.1V101.5H283.0H284.9H286.9H288.8H290.7H292.6H294.6H296.5H298.4H300.3H302.3H304.2H306.1H308.1H310.0H311.9V99.4H313.8V100.2H315.8V99.9H317.7H319.6V98.7H321.6V98.5H323.5V98.7H325.4V54.9H327.3V99.5H329.3V98.7H331.2V96.2H333.1V99.4H335.1V98.7H337.0V97.0H338.9V99.5H340.8V99.4H342.8V101.5H344.7H346.6H348.5H350.5H352.4H354.3H356.3H358.2H360.1H362.0H364.0H365.9H367.8H369.8H371.7" stroke="#4a4aff" stroke-width="1.050" fill="none" stroke-linejoin="round" clip-path="url(#cp11)"/><text x="121.0" y="105.5" font-size="10.700" text-anchor="end" fill="#5e5e5e">0</text><text x="121.0" y="84.1" font-size="10.700" text-anchor="end" fill="#5e5e5e">2500</text><text x="121.0" y="62.7" font-size="10.700" text-anchor="end" fill="#5e5e5e">5000</text><text x="121.0" y="41.3" font-size="10.700" text-anchor="end" fill="#5e5e5e">7500</text><text x="121.0" y="19.9" font-size="10.700" text-anchor="end" fill="#5e5e5e">10000</text><text x="124.9" y="116.0" font-size="10.700" text-anchor="middle" fill="#5e5e5e">0</text><text x="163.5" y="116.0" font-size="10.700" text-anchor="middle" fill="#5e5e5e">20</text><text x="202.0" y="116.0" font-size="10.700" text-anchor="middle" fill="#5e5e5e">40</text><text x="240.6" y="116.0" font-size="10.700" text-anchor="middle" fill="#5e5e5e">60</text><text x="279.1" y="116.0" font-size="10.700" text-anchor="middle" fill="#5e5e5e">80</text><text x="317.7" y="116.0" font-size="10.700" text-anchor="middle" fill="#5e5e5e">100</text><text x="356.3" y="116.0" font-size="10.700" text-anchor="middle" fill="#5e5e5e">120</text><rect x="284.3" y="24.0" width="13.800" height="10.800" fill="#fff" stroke="#b9b9b9" stroke-width="0.800"/><rect x="286.0" y="25.7" width="10.400" height="7.400" fill="#0000ff"/><text x="302.1" y="33.3" font-size="10.600" fill="#8a8a8a">aida12 Rate</text><path d="M371.7 6.1L381.7 16.1L371.7 26.1L361.7 16.1Z" fill="#ff0000"/></svg>
<svg class="abs" style="left:8px;top:789px" width="475" height="120" viewBox="0 0 475 120" font-family="DejaVu Serif, Liberation Serif, serif"><clipPath id="cp12"><rect x="124.8" y="16.3" width="250.2" height="87.3"/></clipPath><path d="M163.9 15.5V101.8M202.4 15.5V101.8M241.0 15.5V101.8M279.5 15.5V101.8M318.1 15.5V101.8M356.7 15.5V101.8M124.8 80.1H375.0M124.8 58.7H375.0M124.8 37.3H375.0" stroke="#e9e9e9" stroke-width="1" fill="none"/><rect x="124.8" y="15.5" width="250.2" height="86.3" fill="none" stroke="#7f7f7f" stroke-width="1.6"/><path d="M125.3 101.5H127.2V100.2H129.2V50.2H131.1V100.2H133.0V99.9H134.9V83.2H136.9V100.2H138.8V100.3H140.7V100.4H142.7V100.5H144.6V100.6H146.5V100.2H148.4V100.6H150.4V100.3H152.3V100.6H154.2V100.5H156.1V100.6H158.1V101.5H160.0H161.9H163.9H165.8H167.7H169.6H171.6H173.5H175.4H177.4H179.3H181.2H183.1H185.1H187.0H188.9V100.3H190.9V100.2H192.8V100.1H194.7V100.0H196.6V100.2H198.6V100.3H200.5V100.4H202.4H204.3V100.3H206.3V100.2H208.2H210.1V100.3H212.1H214.0V100.4H215.9V100.2H217.8V100.6H219.8V101.5H221.7H223.6H225.6H227.5H229.4H231.3H233.3H235.2H237.1H239.1H241.0H242.9H244.8H246.8H248.7H250.6V100.6H252.5V100.2H254.5V99.0H256.4V100.2H258.3V100.3H260.3H262.2V100.2H264.1V100.3H266.0H268.0V100.2H269.9H271.8H273.8H275.7H277.6H279.5V99.0H281.5V101.5H283.4H285.3H287.3H289.2H291.1H293.0H295.0H296.9H298.8H300.7H302.7H304.6H306.5H308.5H310.4H312.3V100.6H314.2V100.2H316.2H318.1V100.4H320.0V99.5H322.0V99.9H323.9V98.2H325.8V24.1H327.7V98.2H329.7V97.3H331.6V97.8H333.5V99.9H335.5V100.2H337.4V78.6H339.3V100.2H341.2V99.9H343.2V101.5H345.1H347.0H348.9H350.9H352.8H354.7H356.7H358.6H360.5H362.4H364.4H366.3H368.2H370.2H372.1" stroke="#4a4aff" stroke-width="1.050" fill="none" stroke-linejoin="round" clip-path="url(#cp12)"/><text x="121.4" y="105.5" font-size="10.700" text-anchor="end" fill="#5e5e5e">0</text><text x="121.4" y="84.1" font-size="10.700" text-anchor="end" fill="#5e5e5e">2500</text><text x="121.4" y="62.7" font-size="10.700" text-anchor="end" fill="#5e5e5e">5000</text><text x="121.4" y="41.3" font-size="10.700" text-anchor="end" fill="#5e5e5e">7500</text><text x="121.4" y="19.9" font-size="10.700" text-anchor="end" fill="#5e5e5e">10000</text><text x="125.3" y="116.0" font-size="10.700" text-anchor="middle" fill="#5e5e5e">0</text><text x="163.9" y="116.0" font-size="10.700" text-anchor="middle" fill="#5e5e5e">20</text><text x="202.4" y="116.0" font-size="10.700" text-anchor="middle" fill="#5e5e5e">40</text><text x="241.0" y="116.0" font-size="10.700" text-anchor="middle" fill="#5e5e5e">60</text><text x="279.5" y="116.0" font-size="10.700" text-anchor="middle" fill="#5e5e5e">80</text><text x="318.1" y="116.0" font-size="10.700" text-anchor="middle" fill="#5e5e5e">100</text><text x="356.7" y="116.0" font-size="10.700" text-anchor="middle" fill="#5e5e5e">120</text><rect x="284.7" y="24.0" width="13.800" height="10.800" fill="#fff" stroke="#b9b9b9" stroke-width="0.800"/><rect x="286.4" y="25.7" width="10.400" height="7.400" fill="#0000ff"/><text x="302.5" y="33.3" font-size="10.600" fill="#8a8a8a">aida13 Rate</text><path d="M372.1 6.1L382.1 16.1L372.1 26.1L362.1 16.1Z" fill="#ff0000"/></svg>
<svg class="abs" style="left:485px;top:789px" width="475" height="120" viewBox="0 0 475 120" font-family="DejaVu Serif, Liberation Serif, serif"><clipPath id="cp13"><rect x="123.7" y="16.3" width="250.2" height="87.3"/></clipPath><path d="M162.8 15.5V101.8M201.3 15.5V101.8M239.9 15.5V101.8M278.4 15.5V101.8M317.0 15.5V101.8M355.6 15.5V101.8M123.7 80.1H373.9M123.7 58.7H373.9M123.7 37.3H373.9" stroke="#e9e9e9" stroke-width="1" fill="none"/><rect x="123.7" y="15.5" width="250.2" height="86.3" fill="none" stroke="#7f7f7f" stroke-width="1.6"/><path d="M124.2 101.5H126.1V82.1H128.1V44.1H130.0V76.2H131.9V81.2H133.8V76.2H135.8V79.8H137.7V83.7H139.6V80.2H141.6V84.4H143.5V88.7H145.4V87.9H147.3V89.9H149.3V89.0H151.2V91.2H153.1V92.3H155.0V94.8H157.0V101.5H158.9H160.8H162.8H164.7H166.6H168.5H170.5H172.4H174.3H176.3H178.2H180.1H182.0H184.0H185.9H187.8V86.0H189.8V89.5H191.7V81.9H193.6V92.7H195.5V91.8H197.5V87.0H199.4V87.7H201.3V93.2H203.2V87.0H205.2V96.5H207.1V92.3H209.0V90.2H211.0V93.2H212.9V85.3H214.8V87.4H216.7V92.0H218.7V101.5H220.6H222.5H224.5H226.4H228.3H230.2H232.2H234.1H236.0H238.0H239.9H241.8H243.7H245.7H247.6H249.5V86.0H251.4V89.3H253.4V88.5H255.3H257.2V88.2H259.2V92.0H261.1V91.1H263.0V90.2H264.9V91.1H266.9V89.0H268.8V92.7H270.7V91.1H272.7V85.2H274.6V90.7H276.5V85.2H278.4V89.0H280.4V101.5H282.3H284.2H286.2H288.1H290.0H291.9H293.9H295.8H297.7H299.6H301.6H303.5H305.4H307.4H309.3H311.2V87.9H313.1V86.2H315.1V89.3H317.0V92.3H318.9V89.9H320.9V87.0H322.8V84.0H324.7V42.4H326.6V87.4H328.6V84.6H330.5V86.5H332.4V86.9H334.4V88.2H336.3V80.7H338.2V89.5H340.1V87.4H342.1V101.5H344.0H345.9H347.8H349.8H351.7H353.6H355.6H357.5H359.4H361.3H363.3H365.2H367.1H369.1H371.0" stroke="#4a4aff" stroke-width="1.050" fill="none" stroke-linejoin="round" clip-path="url(#cp13)"/><text x="120.3" y="105.5" font-size="10.700" text-anchor="end" fill="#5e5e5e">0</text><text x="120.3" y="84.1" font-size="10.700" text-anchor="end" fill="#5e5e5e">2500</text><text x="120.3" y="62.7" font-size="10.700" text-anchor="end" fill="#5e5e5e">5000</text><text x="120.3" y="41.3" font-size="10.700" text-anchor="end" fill="#5e5e5e">7500</text><text x="120.3" y="19.9" font-size="10.700" text-anchor="end" fill="#5e5e5e">10000</text><text x="124.2" y="116.0" font-size="10.700" text-anchor="middle" fill="#5e5e5e">0</text><text x="162.8" y="116.0" font-size="10.700" text-anchor="middle" fill="#5e5e5e">20</text><text x="201.3" y="116.0" font-size="10.700" text-anchor="middle" fill="#5e5e5e">40</text><text x="239.9" y="116.0" font-size="10.700" text-anchor="middle" fill="#5e5e5e">60</text><text x="278.4" y="116.0" font-size="10.700" text-anchor="middle" fill="#5e5e5e">80</text><text x="317.0" y="116.0" font-size="10.700" text-anchor="middle" fill="#5e5e5e">100</text><text x="355.6" y="116.0" font-size="10.700" text-anchor="middle" fill="#5e5e5e">120</text><rect x="283.6" y="24.0" width="13.800" height="10.800" fill="#fff" stroke="#b9b9b9" stroke-width="0.800"/><rect x="285.3" y="25.7" width="10.400" height="7.400" fill="#0000ff"/><text x="301.4" y="33.3" font-size="10.600" fill="#8a8a8a">aida14 Rate</text><path d="M371.0 6.1L381.0 16.1L371.0 26.1L361.0 16.1Z" fill="#ff0000"/></svg>
<svg class="abs" style="left:961px;top:789px" width="475" height="120" viewBox="0 0 475 120" font-family="DejaVu Serif, Liberation Serif, serif"><clipPath id="cp14"><rect x="124.0" y="16.3" width="250.2" height="87.3"/></clipPath><path d="M163.2 15.5V101.8M201.7 15.5V101.8M240.3 15.5V101.8M278.8 15.5V101.8M317.4 15.5V101.8M356.0 15.5V101.8M124.0 80.1H374.3M124.0 58.7H374.3M124.0 37.3H374.3" stroke="#e9e9e9" stroke-width="1" fill="none"/><rect x="124.0" y="15.5" width="250.2" height="86.3" fill="none" stroke="#7f7f7f" stroke-width="1.6"/><path d="M124.6 101.5H126.5V98.2H128.5V72.4H130.4V98.2H132.3V98.7H134.2V92.3H136.2V97.8H138.1H140.0V98.2H142.0V98.5H143.9V98.7H145.8V99.4H147.7V99.0H149.7V99.5H151.6V99.0H153.5V99.5H155.4V99.0H157.4V101.5H159.3H161.2H163.2H165.1H167.0H168.9H170.9H172.8H174.7H176.7H178.6H180.5H182.4H184.4H186.3H188.2V98.2H190.2V98.7H192.1V98.2H194.0V97.0H195.9V97.8H197.9V98.2H199.8V97.0H201.7V98.5H203.6V97.3H205.6V97.8H207.5H209.4V98.5H211.4V96.5H213.3V95.2H215.2V97.8H217.1V98.2H219.1V101.5H221.0H222.9H224.9H226.8H228.7H230.6H232.6H234.5H236.4H238.4H240.3H242.2H244.1H246.1H248.0H249.9V98.2H251.8V97.3H253.8V97.8H255.7V99.4H257.6V98.2H259.6V97.8H261.5V98.7H263.4H265.3V97.3H267.3V99.5H269.2V99.0H271.1V97.8H273.1V99.4H275.0V98.7H276.9H278.8H280.8V101.5H282.7H284.6H286.6H288.5H290.4H292.3H294.3H296.2H298.1H300.0H302.0H303.9H305.8H307.8H309.7H311.6V94.8H313.5V98.7H315.5V98.2H317.4V96.2H319.3V96.0H321.3H323.2V92.7H325.1V12.5H327.0V96.5H329.0V96.9H330.9V92.0H332.8V97.8H334.8V98.5H336.7V87.0H338.6V98.7H340.5V96.2H342.5V101.5H344.4H346.3H348.2H350.2H352.1H354.0H356.0H357.9H359.8H361.7H363.7H365.6H367.5H369.5H371.4" stroke="#4a4aff" stroke-width="1.050" fill="none" stroke-linejoin="round" clip-path="url(#cp14)"/><text x="120.7" y="105.5" font-size="10.700" text-anchor="end" fill="#5e5e5e">0</text><text x="120.7" y="84.1" font-size="10.700" text-anchor="end" fill="#5e5e5e">2500</text><text x="120.7" y="62.7" font-size="10.700" text-anchor="end" fill="#5e5e5e">5000</text><text x="120.7" y="41.3" font-size="10.700" text-anchor="end" fill="#5e5e5e">7500</text><text x="120.7" y="19.9" font-size="10.700" text-anchor="end" fill="#5e5e5e">10000</text><text x="124.6" y="116.0" font-size="10.700" text-anchor="middle" fill="#5e5e5e">0</text><text x="163.2" y="116.0" font-size="10.700" text-anchor="middle" fill="#5e5e5e">20</text><text x="201.7" y="116.0" font-size="10.700" text-anchor="middle" fill="#5e5e5e">40</text><text x="240.3" y="116.0" font-size="10.700" text-anchor="middle" fill="#5e5e5e">60</text><text x="278.8" y="116.0" font-size="10.700" text-anchor="middle" fill="#5e5e5e">80</text><text x="317.4" y="116.0" font-size="10.700" text-anchor="middle" fill="#5e5e5e">100</text><text x="356.0" y="116.0" font-size="10.700" text-anchor="middle" fill="#5e5e5e">120</text><rect x="284.0" y="24.0" width="13.800" height="10.800" fill="#fff" stroke="#b9b9b9" stroke-width="0.800"/><rect x="285.7" y="25.7" width="10.400" height="7.400" fill="#0000ff"/><text x="301.8" y="33.3" font-size="10.600" fill="#8a8a8a">aida15 Rate</text><path d="M371.4 6.1L381.4 16.1L371.4 26.1L361.4 16.1Z" fill="#ff0000"/></svg>
<svg class="abs" style="left:1437px;top:789px" width="475" height="120" viewBox="0 0 475 120" font-family="DejaVu Serif, Liberation Serif, serif"><clipPath id="cp15"><rect x="124.6" y="16.3" width="250.0" height="87.3"/></clipPath><path d="M163.5 15.5V101.8M202.0 15.5V101.8M240.6 15.5V101.8M279.1 15.5V101.8M317.7 15.5V101.8M356.3 15.5V101.8M124.6 80.1H374.6M124.6 58.7H374.6M124.6 37.3H374.6" stroke="#cccccc" stroke-width="1" fill="none"/><rect x="124.6" y="15.5" width="250.0" height="86.3" fill="none" stroke="#000" stroke-width="2.1"/><path d="M124.9 101.5H126.8V12.5H128.8H130.7V20.4H132.6V26.2H134.5V12.5H136.5V50.5H138.4V37.5H140.3V46.0H142.3V65.5H144.2V60.6H146.1V57.3H148.0V49.7H150.0V67.3H151.9V72.8H153.8V64.3H155.7V80.3H157.7V101.5H159.6H161.5H163.5H165.4H167.3H169.2H171.2H173.1H175.0H177.0H178.9H180.8H182.7H184.7H186.6H188.5V57.9H190.5H192.4V49.0H194.3V73.7H196.2V69.2H198.2V66.2H200.1V80.0H202.0V77.2H203.9V74.2H205.9V70.1H207.8V84.6H209.7V80.0H211.7V85.7H213.6V65.4H215.5V101.5H217.4V86.3H219.4V101.5H221.3H223.2H225.2H227.1H229.0H230.9H232.9H234.8H236.7H238.7H240.6H242.5H244.4H246.4H248.3H250.2V73.6H252.1V101.5H254.1V48.0H256.0V101.5H257.9H259.9V49.7H261.8V101.5H263.7V47.7H265.6V58.3H267.6V101.5H269.5V64.8H271.4V69.7H273.4V101.5H275.3V66.3H277.2V101.5H279.1V100.2H281.1V101.5H283.0H284.9H286.9H288.8H290.7H292.6H294.6H296.5H298.4H300.3H302.3H304.2H306.1H308.1H310.0H311.9V66.1H313.8V101.5H315.8H317.7V62.5H319.6V101.5H321.6V62.5H323.5V72.7H325.4V75.8H327.3V101.5H329.3H331.2V57.0H333.1V69.7H335.1V76.2H337.0V84.7H338.9V72.9H340.8V101.5H342.8H344.7H346.6H348.5H350.5H352.4H354.3H356.3H358.2H360.1H362.0H364.0H365.9H367.8H369.8H371.7" stroke="#3e3eff" stroke-width="1.050" fill="none" stroke-linejoin="round" clip-path="url(#cp15)"/><text x="121.0" y="105.5" font-size="10.700" text-anchor="end" fill="#505050">0</text><text x="121.0" y="84.1" font-size="10.700" text-anchor="end" fill="#505050">2500</text><text x="121.0" y="62.7" font-size="10.700" text-anchor="end" fill="#505050">5000</text><text x="121.0" y="41.3" font-size="10.700" text-anchor="end" fill="#505050">7500</text><text x="121.0" y="19.9" font-size="10.700" text-anchor="end" fill="#505050">10000</text><text x="124.9" y="116.0" font-size="10.700" text-anchor="middle" fill="#505050">0</text><text x="163.5" y="116.0" font-size="10.700" text-anchor="middle" fill="#505050">20</text><text x="202.0" y="116.0" font-size="10.700" text-anchor="middle" fill="#505050">40</text><text x="240.6" y="116.0" font-size="10.700" text-anchor="middle" fill="#505050">60</text><text x="279.1" y="116.0" font-size="10.700" text-anchor="middle" fill="#505050">80</text><text x="317.7" y="116.0" font-size="10.700" text-anchor="middle" fill="#505050">100</text><text x="356.3" y="116.0" font-size="10.700" text-anchor="middle" fill="#505050">120</text><rect x="284.3" y="24.0" width="13.800" height="10.800" fill="#fff" stroke="#b9b9b9" stroke-width="0.800"/><rect x="286.0" y="25.7" width="10.400" height="7.400" fill="#0000ff"/><text x="302.1" y="33.3" font-size="10.600" fill="#000">aida16 Rate</text><path d="M371.7 6.1L381.7 16.1L371.7 26.1L361.7 16.1Z" fill="#00ff00"/></svg>
</body></html>
